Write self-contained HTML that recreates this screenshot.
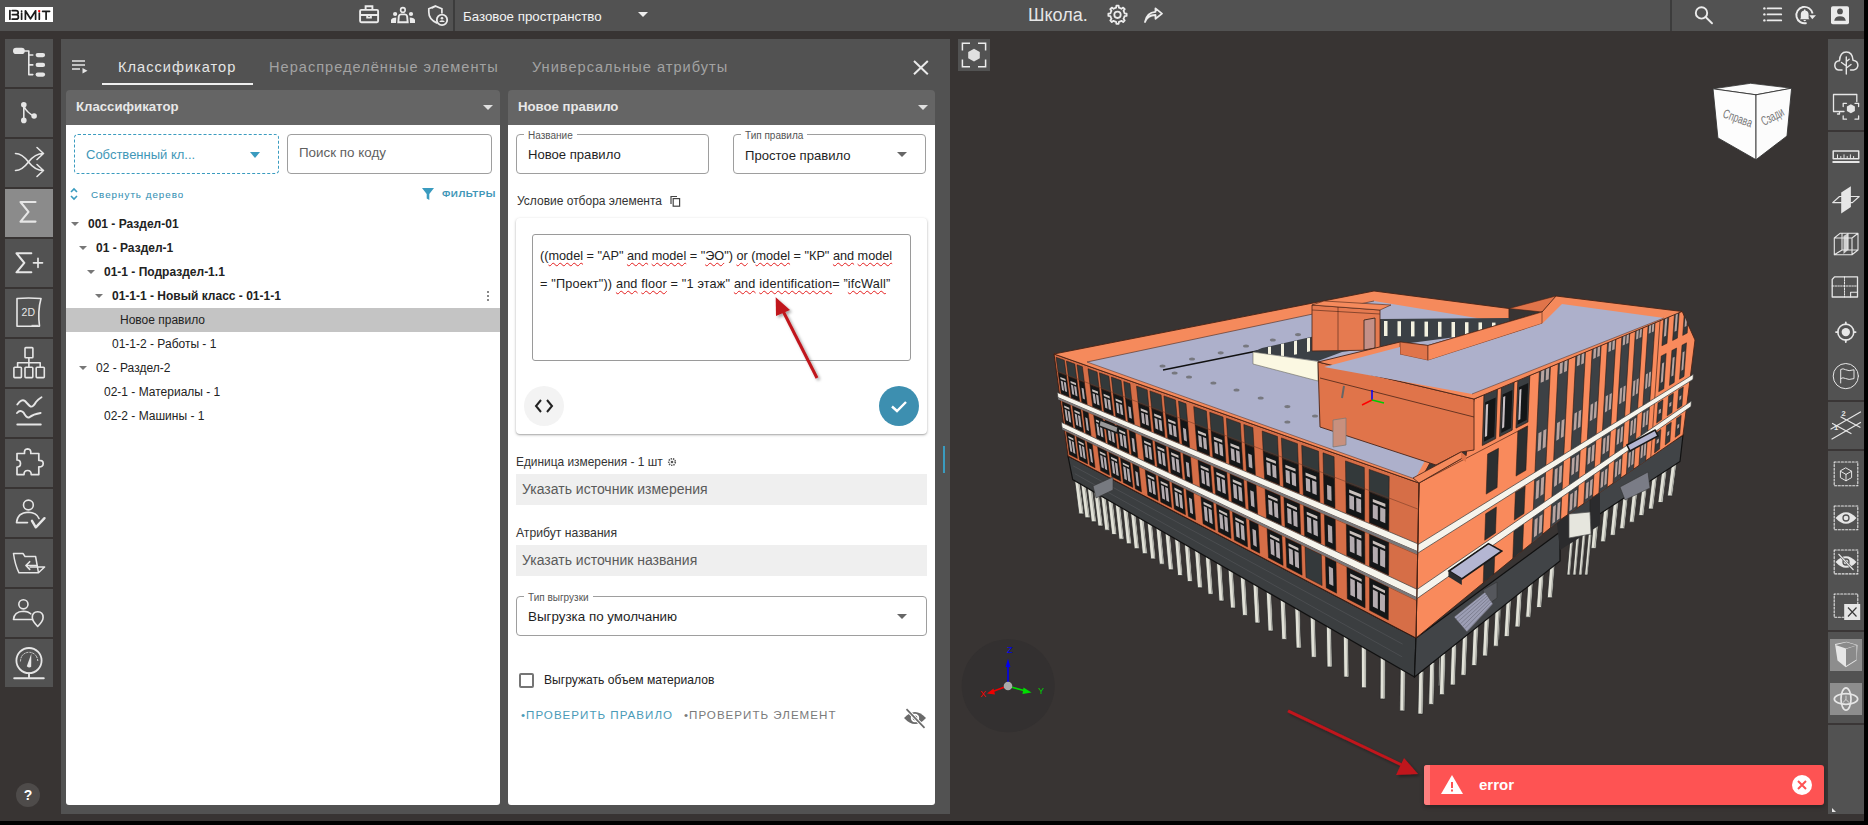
<!DOCTYPE html>
<html><head><meta charset="utf-8">
<style>
*{box-sizing:border-box;margin:0;padding:0}
html,body{width:1868px;height:825px;overflow:hidden;background:#000;font-family:"Liberation Sans",sans-serif}
.abs{position:absolute}
#app{position:absolute;left:0;top:0;width:1864px;height:821px;background:#383433;overflow:hidden}
#top{left:0;top:0;width:1864px;height:31px;background:#525252}
.sb{left:5px;width:48px;height:48px;background:#525252}
.sb.act{background:#8b8b8b}
.sb svg{position:absolute;left:0;top:0}
#panel{left:61px;top:39px;width:889px;height:775px;background:#525252}
.tab{top:58.7px;font-size:14.6px;letter-spacing:1px;color:#a3a3a3}
.hdr{top:90px;height:35px;background:#656565;border-radius:4px 4px 0 0;color:#e8e8e8;font-weight:bold;font-size:13.2px}
.white{background:#fff}
.tri{width:0;height:0;border-left:5px solid transparent;border-right:5px solid transparent;border-top:5px solid #e0e0e0}
.row{left:66px;width:434px;height:24px;font-size:12px;color:#222;line-height:24px;white-space:nowrap}
.row b{font-weight:bold}
.tt{position:absolute;top:10px;width:0;height:0;border-left:4px solid transparent;border-right:4px solid transparent;border-top:4px solid #777}
.lbl{font-size:12.5px;color:#333;white-space:nowrap}
.grayin{left:516px;width:411px;height:31px;background:#efefef;font-size:14px;color:#5a5a5a;line-height:31px;padding-left:6px}
.outl{border:1px solid #a8a8a8;border-radius:4px}
.flab{position:absolute;top:-5.5px;left:8px;background:#fff;padding:0 4px;font-size:10px;color:#555;line-height:12px}
u{text-decoration:underline wavy #e41e1e;text-decoration-thickness:1.1px;text-underline-offset:1.5px}
.rt{left:1828px;width:36px;background:#525252}
</style></head><body>
<div id="app">
  <!-- TOP BAR -->
  <div id="top" class="abs">
    <div class="abs" style="left:5px;top:7px;width:48px;height:15px;background:#fff"></div>
    <svg class="abs" style="left:0;top:0" width="1864" height="31" viewBox="0 0 1864 31">
      <g stroke="#1c1c1c" stroke-width="1.7" fill="none" stroke-linecap="round" stroke-linejoin="round">
        <path d="M9.9 10.6 V19.2"/>
        <path d="M12.2 10.6 H16 Q18.2 10.6 18.2 12.7 Q18.2 14.6 16 14.6 H12.4 M16 14.6 Q18.4 14.6 18.4 16.9 Q18.4 19.2 16 19.2 H12.2"/>
        <path d="M21.6 13 V19.2"/>
        <path d="M25.4 19.2 V10.8 L30.5 18.8 L35.6 10.8 V19.2"/>
        <path d="M39.3 13 V19.2"/>
        <path d="M42.6 11.3 H49.6 M46.1 11.5 V19.2"/>
      </g>
      <circle cx="21.6" cy="11.2" r="0.9" fill="#1c1c1c"/>
      <rect x="38.2" y="10.1" width="2" height="2" fill="#f00"/>
      <g stroke="#ebebeb" stroke-width="1.9" fill="none">
        <rect x="360.1" y="9.9" width="18" height="12.3" rx="1.2"/>
        <path d="M365.6 9.6 V6.2 H372.4 V9.6 M360.3 15 H378 M367.2 15 V17.6 H370.9 V15"/>
        <circle cx="402.9" cy="9.9" r="2.3" stroke-width="1.6"/>
        <path d="M398.3 22.3 L398.8 16.2 Q399.2 14.4 401 14.4 H404.9 Q406.7 14.4 407.1 16.2 L407.7 22.3 Z"/>
        <path d="M431.5 8.2 L435.8 6.1 L441.9 8.8 V13.4 M437.1 23.1 Q428.7 19.5 428.8 12 V8.7 L435.8 5.8" stroke-width="1.7"/>
        <circle cx="442" cy="19.9" r="5.2" stroke-width="1.8"/>
      </g>
      <g fill="#ebebeb">
        <circle cx="395.1" cy="14" r="2.1"/><circle cx="411" cy="14" r="2.1"/>
        <path d="M391 23 V20 Q391.5 17.4 396.3 17.4 L396 23 Z M415 23 V20 Q414.5 17.4 409.7 17.4 L410 23 Z"/>
        <circle cx="442" cy="18.2" r="1.3"/><path d="M439.2 22 Q439.6 20.3 442 20.3 Q444.4 20.3 444.8 22 Z"/>
      </g>
    </svg>
    <div class="abs" style="left:453px;top:0;width:2px;height:31px;background:#3c3c3c"></div>
    <div class="abs" style="left:463px;top:9px;font-size:13.3px;color:#f4f4f4">Базовое пространство</div>
    <div class="abs tri" style="left:638px;top:12px;border-top-color:#eee;border-left-width:5px;border-right-width:5px;border-top-width:5px"></div>
    <div class="abs" style="left:1028px;top:5px;font-size:18px;color:#e6e6e6">Школа.</div>
    <div class="abs" style="left:1670px;top:0;width:2px;height:31px;background:#3c3c3c"></div>
    <svg class="abs" style="left:0;top:0" width="1864" height="31" viewBox="0 0 1864 31">
      <g stroke="#ececec" stroke-width="1.8" fill="none">
        <path d="M1124.56 13.37 L1126.63 13.70 L1126.63 15.90 L1124.56 16.23 L1124.39 16.88 L1123.84 18.21 L1123.50 18.78 L1124.74 20.48 L1123.18 22.04 L1121.48 20.80 L1120.91 21.14 L1119.58 21.69 L1118.93 21.86 L1118.60 23.93 L1116.40 23.93 L1116.07 21.86 L1115.42 21.69 L1114.09 21.14 L1113.52 20.80 L1111.82 22.04 L1110.26 20.48 L1111.50 18.78 L1111.16 18.21 L1110.61 16.88 L1110.44 16.23 L1108.37 15.90 L1108.37 13.70 L1110.44 13.37 L1110.61 12.72 L1111.16 11.39 L1111.50 10.82 L1110.26 9.12 L1111.82 7.56 L1113.52 8.80 L1114.09 8.46 L1115.42 7.91 L1116.07 7.74 L1116.40 5.67 L1118.60 5.67 L1118.93 7.74 L1119.58 7.91 L1120.91 8.46 L1121.48 8.80 L1123.18 7.56 L1124.74 9.12 L1123.50 10.82 L1123.84 11.39 L1124.39 12.72 Z" stroke-linejoin="round"/>
        <circle cx="1117.5" cy="14.8" r="3.2"/>
      </g>
      <path d="M1145 22 Q1147 15.2 1155.5 15 V18.8 L1162 13.6 L1155.5 8.4 V11.8 Q1146.5 12.5 1145 22 Z" fill="none" stroke="#ececec" stroke-width="1.8" stroke-linejoin="round"/>
      <g stroke="#ebebeb" stroke-width="1.9" fill="none" stroke-linecap="round">
        <circle cx="1701.5" cy="12.9" r="5.7"/>
        <path d="M1705.6 17 L1712 23.3"/>
        <path d="M1767.6 8.4 H1781.2 M1767.6 14.4 H1781.2 M1767.6 20.4 H1781.2"/>
      </g>
      <g fill="#ebebeb">
        <circle cx="1764.4" cy="8.4" r="1.2"/><circle cx="1764.4" cy="14.4" r="1.2"/><circle cx="1764.4" cy="20.4" r="1.2"/>
        <path d="M1800.8 18.2 V14.6 Q1800.8 11.2 1804 10.6 V9.4 H1805.4 V10.6 Q1808.6 11.2 1808.6 14.6 V18.2 L1809.6 19.2 H1799.8 Z M1803.4 19.9 H1806 Q1805.7 21.2 1804.7 21.2 Q1803.7 21.2 1803.4 19.9Z"/>
        <path d="M1809.3 15.2 L1816 15.2 L1812.3 19.2 Z"/>
        <rect x="1831" y="6.2" width="18" height="18" rx="1.8"/>
      </g>
      <path d="M1812.6 13.5 A8.2 8.2 0 1 0 1806.6 23" stroke="#ebebeb" stroke-width="1.9" fill="none"/>
      <g fill="#525252">
        <circle cx="1840" cy="11.4" r="2.9"/>
        <path d="M1834.2 20.7 Q1835 16.3 1840 16.3 Q1845 16.3 1845.8 20.7 Z"/>
      </g>
    </svg>
  </div>
  <!-- SIDEBAR -->
  <div class="abs sb" style="top:39px"></div>
  <div class="abs sb" style="top:89px"></div>
  <div class="abs sb" style="top:139px"></div>
  <div class="abs sb act" style="top:189px"></div>
  <div class="abs sb" style="top:239px"></div>
  <div class="abs sb" style="top:289px"></div>
  <div class="abs sb" style="top:339px"></div>
  <div class="abs sb" style="top:389px"></div>
  <div class="abs sb" style="top:439px"></div>
  <div class="abs sb" style="top:489px"></div>
  <div class="abs sb" style="top:539px"></div>
  <div class="abs sb" style="top:589px"></div>
  <div class="abs sb" style="top:639px"></div>
  <svg class="abs" style="left:0;top:0" width="60" height="821" viewBox="0 0 60 821">
    <g stroke="#e6e6e6" fill="none" stroke-width="1.6" stroke-linecap="round" stroke-linejoin="round">
      <!-- 1 tree -->
      <path d="M24.6 51 H28.8 V74.8 M28.8 55 H32.8 M28.8 64.9 H32.8 M28.8 74.6 H32.8"/>
      <!-- 2 branch -->
      <path d="M23.8 104.7 V120.4 M23.8 106 Q27 113 34.1 116"/>
      <!-- 3 shuffle -->
      <path d="M15.5 153.5 Q22 153.5 28.5 162 Q35 170.5 43.5 170.5 M15.5 170.5 Q22 170.5 28.5 162 Q35 153.5 43.5 153.5 M37 147.5 L43.5 153.5 L37 159.5 M37 164.5 L43.5 170.5 L37 176.5"/>
      <!-- 4 sigma -->
      <path d="M35.5 202 H20.5 L28.5 211.8 L20.5 221.6 H35.5" stroke-width="2.1"/>
      <!-- 5 sigma+ -->
      <path d="M31.3 253.3 H16.5 L24.3 262.8 L16.5 272.3 H31.3" stroke-width="2.1"/>
      <path d="M33.5 262.8 H42.5 M38 258.3 V267.3" stroke-width="1.7"/>
      <!-- 6 2D page -->
      <path d="M17 298.5 Q28 297.5 41 298.5 Q37.5 311 39.5 326.2 H17 Z"/>
      <!-- 7 hierarchy -->
      <rect x="25" y="347.6" width="7.9" height="10.1" rx="0.8"/>
      <rect x="13.9" y="367.3" width="7.5" height="10.3" rx="0.8"/>
      <rect x="25" y="367.3" width="7.8" height="10.3" rx="0.8"/>
      <rect x="36.2" y="367.3" width="8.1" height="10.3" rx="0.8"/>
      <path d="M28.9 357.7 V367.3 M17.6 367.3 V362.8 H40.2 V367.3"/>
      <!-- 8 waves -->
      <path d="M17.3 404.5 Q21.5 398.5 25 401 Q29 405.5 30.5 406.5 Q33 407.5 36 402 Q38.5 399 41.5 397.2" stroke-width="1.9"/>
      <path d="M17 413 Q20 409.5 23.5 412.5 Q26.5 418 29 417.5 Q33.5 414 40.6 413" stroke-width="1.9"/>
      <path d="M17.3 424.5 H40.8" stroke-width="1.9"/>
      <!-- 9 puzzle -->
      <path d="M17 453.5 H24.5 Q24 449 27.6 448.8 Q31.2 449 30.8 453.5 H38.8 V460.3 Q43.2 460 43.2 463.5 Q43.2 467 38.8 466.8 V474.6 H31.2 Q31.2 470.5 27.6 470.5 Q24 470.5 24 474.6 H17 V467 Q20.5 467 20.5 463.5 Q20.5 460 17 460 Z" stroke-width="1.7"/>
      <!-- 10 person check -->
      <circle cx="28.4" cy="505" r="4.9"/>
      <path d="M16.5 522.6 Q17.5 512.5 28.3 512.3 Q36.5 512.5 39 518.5 M16.5 522.6 H27.5"/>
      <path d="M32 520.8 L35.8 527.3 L44.5 518.2" stroke-width="2.4"/>
      <!-- 11 folder -->
      <path d="M13.5 553.5 H23 L25 556.5 H35.6 L38.5 572.8 H19 Q15 565 13.5 553.5 Z M38.5 572.8 L44.6 567 H30" stroke-width="1.5"/>
      <path d="M37 565.5 H26 M29.7 561.7 L25.9 565.5 L29.7 569.4" stroke-width="1.6"/>
      <!-- 12 person pin -->
      <circle cx="23.4" cy="604.3" r="4.6"/>
      <path d="M13.5 619.5 Q14 611.5 23.4 611.2 Q28.5 611.5 30.7 613.8 M13.5 619.5 H32.5"/>
      <path d="M37.7 626.5 Q32.3 621 32.3 617.5 Q32.3 611.8 37.7 611.8 Q43.1 611.8 43.1 617.5 Q43.1 621 37.7 626.5 Z"/>
      <!-- 13 gauge -->
      <circle cx="29" cy="660.6" r="12.6" stroke-width="1.8"/>
      <path d="M29 673.3 V677.5 M14.2 678.2 H43.8" stroke-width="1.9"/>
      <path d="M20.5 661 Q21 653 29 652.2 Q37 653 37.8 661" stroke-width="0.9" stroke-dasharray="1.2 1.6"/>
    </g>
    <g fill="#e6e6e6">
      <rect x="13" y="47.8" width="11.8" height="6.3" rx="3.1"/>
      <rect x="35.6" y="53" width="9.5" height="4.2" rx="2.1"/>
      <rect x="35.6" y="62.8" width="9.5" height="4.2" rx="2.1"/>
      <rect x="35.6" y="72.5" width="9.5" height="4.2" rx="2.1"/>
      <circle cx="23.8" cy="104.7" r="2.8"/><circle cx="23.8" cy="120.4" r="2.8"/><circle cx="34.1" cy="116" r="2.8"/>
      <circle cx="37.7" cy="617.4" r="1.2" fill="#525252"/>
      <path d="M26.8 666.2 L31.3 653.8 L31.2 666.8 Q29.2 668.6 26.8 666.2 Z"/>
      <path d="M31.5 324.8 H38.2 V326.5 H31.5 Z" opacity="0.8"/>
    </g>
    <text x="28.3" y="316.3" font-family="Liberation Sans" font-size="10.5" fill="#e6e6e6" text-anchor="middle">2D</text>
  </svg>
  <div class="abs" style="left:16px;top:783px;width:24px;height:24px;border-radius:50%;background:#4e4b4a;color:#fff;font-weight:bold;font-size:14px;text-align:center;line-height:24px">?</div>

  <!-- PANEL -->
  <div id="panel" class="abs"></div>
  <div class="abs tab" style="left:118px;color:#e6e6e6">Классификатор</div>
  <div class="abs" style="left:102px;top:83px;width:151px;height:2px;background:#eee"></div>
  <div class="abs tab" style="left:269px">Нераспределённые элементы</div>
  <div class="abs tab" style="left:532px">Универсальные атрибуты</div>

  <!-- left classifier -->
  <div class="abs hdr" style="left:66px;width:434px"><span class="abs" style="left:10px;top:9px">Классификатор</span></div>
  <div class="abs tri" style="left:483px;top:104.5px"></div>
  <div class="abs white" style="left:66px;top:125px;width:434px;height:680px;border-radius:0 0 3px 3px"></div>

  <!-- left content -->
  <div class="abs" style="left:74px;top:134px;width:205px;height:40px;border:1px dashed #3a9bbf;border-radius:4px"></div>
  <div class="abs" style="left:86px;top:147px;font-size:13px;color:#3f97b8;white-space:nowrap">Собственный кл...</div>
  <div class="abs tri" style="left:250px;top:152px;border-top-color:#3a9bbf;border-top-width:6px"></div>
  <div class="abs outl" style="left:287px;top:134px;width:205px;height:40px;border-color:#9e9e9e"></div>
  <div class="abs" style="left:299px;top:145px;font-size:13.4px;color:#5f5f5f;white-space:nowrap">Поиск по коду</div>
  <svg class="abs" style="left:69px;top:187px" width="10" height="14" viewBox="0 0 10 14"><path d="M2 5 L5 2 L8 5 M2 9 L5 12 L8 9" stroke="#3a9bbf" stroke-width="1.6" fill="none"/></svg>
  <div class="abs" style="left:91px;top:188.5px;font-size:9.8px;letter-spacing:1px;color:#3a93b5;white-space:nowrap;-webkit-text-stroke:0.08px #3a93b5">Свернуть дерево</div>
  <svg class="abs" style="left:422px;top:188px" width="12" height="12" viewBox="0 0 12 12"><path d="M0 0 H12 L7.3 6 V12 L4.7 10.5 V6 Z" fill="#3a9bbf"/></svg>
  <div class="abs" style="left:442px;top:188px;font-size:9.8px;letter-spacing:0.5px;font-weight:bold;color:#3f97b8;white-space:nowrap">ФИЛЬТРЫ</div>

  <div class="abs row" style="top:212px"><i class="tt" style="left:5px"></i><b class="abs" style="left:22px">001 - Раздел-01</b></div>
  <div class="abs row" style="top:236px"><i class="tt" style="left:13px"></i><b class="abs" style="left:30px">01 - Раздел-1</b></div>
  <div class="abs row" style="top:260px"><i class="tt" style="left:21px"></i><b class="abs" style="left:38px">01-1 - Подраздел-1.1</b></div>
  <div class="abs row" style="top:284px"><i class="tt" style="left:29px"></i><b class="abs" style="left:46px">01-1-1 - Новый класс - 01-1-1</b>
    <span class="abs" style="left:421px;top:7px;width:2px;height:2px;background:#888;box-shadow:0 4px 0 #888,0 8px 0 #888"></span></div>
  <div class="abs row" style="top:308px;background:#c4c4c4"><span class="abs" style="left:54px">Новое правило</span></div>
  <div class="abs row" style="top:332px"><span class="abs" style="left:46px">01-1-2 - Работы - 1</span></div>
  <div class="abs row" style="top:356px"><i class="tt" style="left:13px"></i><span class="abs" style="left:30px">02 - Раздел-2</span></div>
  <div class="abs row" style="top:380px"><span class="abs" style="left:38px">02-1 - Материалы - 1</span></div>
  <div class="abs row" style="top:404px"><span class="abs" style="left:38px">02-2 - Машины - 1</span></div>
  <!-- right rule -->
  <div class="abs hdr" style="left:508px;width:427px"><span class="abs" style="left:10px;top:9px">Новое правило</span></div>
  <div class="abs tri" style="left:918px;top:104.5px"></div>
  <div class="abs white" style="left:508px;top:125px;width:427px;height:680px;border-radius:0 0 3px 3px"></div>

  <!-- right form -->
  <div class="abs outl" style="left:516px;top:134px;width:193px;height:40px;border-color:#9e9e9e"><span class="flab" style="left:7px">Название</span></div>
  <div class="abs" style="left:528px;top:147px;font-size:13.1px;color:#1f1f1f;white-space:nowrap">Новое правило</div>
  <div class="abs outl" style="left:733px;top:134px;width:193px;height:40px;border-color:#9e9e9e"><span class="flab" style="left:7px">Тип правила</span></div>
  <div class="abs" style="left:745px;top:148px;font-size:13.1px;color:#1f1f1f;white-space:nowrap">Простое правило</div>
  <div class="abs tri" style="left:897px;top:152px;border-top-color:#666;border-top-width:5px"></div>
  <div class="abs lbl" style="left:517px;top:194px;font-size:12px">Условие отбора элемента</div>
  <svg class="abs" style="left:670px;top:195px" width="11" height="12" viewBox="0 0 11 12"><path d="M1 9 V1.5 H7" stroke="#444" stroke-width="1.2" fill="none"/><rect x="3.2" y="3.6" width="6.4" height="7.6" stroke="#444" stroke-width="1.2" fill="none"/></svg>
  <div class="abs" style="left:516px;top:218px;width:411px;height:216px;background:#fff;border-radius:4px;box-shadow:0 1px 3px rgba(0,0,0,.28),0 1px 1px rgba(0,0,0,.12)"></div>
  <div class="abs" style="left:532px;top:234px;width:379px;height:127px;border:1px solid #9a9a9a;border-radius:3px"></div>
  <div class="abs" style="left:540px;top:248px;font-size:12.7px;color:#222;white-space:nowrap;line-height:17px">((<u>model</u> = "АР" <u>and</u> <u>model</u> = "<u>ЭО</u>") <u>or</u> (<u>model</u> = "КР" <u>and</u> <u>model</u></div>
  <div class="abs" style="left:540px;top:276px;font-size:12.7px;color:#222;white-space:nowrap;line-height:17px;letter-spacing:0.17px">= "Проект")) <u>and</u> <u>floor</u> = "1 этаж" <u>and</u> <u>identification</u>= ”<u>ifcWall</u>”</div>
  <div class="abs" style="left:524px;top:386px;width:40px;height:40px;border-radius:50%;background:#f3f3f3"></div>
  <svg class="abs" style="left:534px;top:398px" width="20" height="16" viewBox="0 0 20 16"><path d="M7 2 L2 8 L7 14 M13 2 L18 8 L13 14" stroke="#222" stroke-width="2" fill="none"/></svg>
  <div class="abs" style="left:879px;top:386px;width:40px;height:40px;border-radius:50%;background:#3d8fb0"></div>
  <svg class="abs" style="left:887px;top:394px" width="24" height="24" viewBox="0 0 24 24"><path d="M5 12.5 L10 17 L19 8" stroke="#fff" stroke-width="2.4" fill="none"/></svg>

  <div class="abs lbl" style="left:516px;top:455px;font-size:11.9px">Единица измерения - 1 шт</div>
  <svg class="abs" style="left:667px;top:457px" width="10" height="10" viewBox="0 0 10 10"><circle cx="5" cy="5" r="3.3" stroke="#555" stroke-width="1.6" fill="none" stroke-dasharray="1.4 0.9"/><circle cx="5" cy="5" r="1.3" fill="#555"/></svg>
  <div class="abs grayin" style="top:474px">Указать источник измерения</div>
  <div class="abs lbl" style="left:516px;top:526px;font-size:12.2px">Атрибут названия</div>
  <div class="abs grayin" style="top:545px">Указать источник названия</div>
  <div class="abs outl" style="left:516px;top:596px;width:411px;height:40px;border-color:#9e9e9e"><span class="flab" style="left:7px">Тип выгрузки</span></div>
  <div class="abs" style="left:528px;top:609px;font-size:13.4px;color:#1f1f1f;white-space:nowrap">Выгрузка по умолчанию</div>
  <div class="abs tri" style="left:897px;top:614px;border-top-color:#666;border-top-width:5px"></div>
  <div class="abs" style="left:519px;top:673px;width:15px;height:15px;border:2px solid #757575;border-radius:2px"></div>
  <div class="abs" style="left:544px;top:673px;font-size:12.1px;color:#222;white-space:nowrap">Выгружать объем материалов</div>
  <div class="abs" style="left:521px;top:708px;font-size:11.6px;letter-spacing:1px;color:#4a9bb8;white-space:nowrap">•ПРОВЕРИТЬ ПРАВИЛО</div>
  <div class="abs" style="left:684px;top:708px;font-size:11.6px;letter-spacing:1px;color:#7a7a7a;white-space:nowrap">•ПРОВЕРИТЬ ЭЛЕМЕНТ</div>
  <div class="abs" style="left:943px;top:446px;width:2px;height:27px;background:#3a9bbf"></div>

  <!-- BUILDING START -->
  <svg class="abs" style="left:0;top:0" width="1864" height="821" viewBox="0 0 1864 821">
<polygon points="1439.5,645.0 1444.5,645.0 1443.3,686.0 1438.3,686.0" fill="#e2e2d8" stroke="#2a2a2a" stroke-width="0.8" stroke-linejoin="round"/>
<line x1="1443.2" y1="646.0" x2="1442.1" y2="685.0" stroke="#9a9a94" stroke-width="0.9"/>
<polygon points="1496.5,603.0 1501.5,603.0 1499.5,640.0 1494.5,640.0" fill="#e2e2d8" stroke="#2a2a2a" stroke-width="0.8" stroke-linejoin="round"/>
<line x1="1500.2" y1="604.0" x2="1498.3" y2="639.0" stroke="#9a9a94" stroke-width="0.9"/>
<polygon points="1074.3,477.8 1079.3,477.8 1083.9,513.9 1078.9,513.9" fill="#e2e2d8" stroke="#2a2a2a" stroke-width="0.8" stroke-linejoin="round"/>
<line x1="1078.1" y1="478.8" x2="1082.7" y2="512.9" stroke="#9a9a94" stroke-width="0.9"/>
<polygon points="1080.5,481.4 1085.5,481.4 1090.1,517.8 1085.1,517.8" fill="#e2e2d8" stroke="#2a2a2a" stroke-width="0.8" stroke-linejoin="round"/>
<line x1="1084.3" y1="482.4" x2="1088.8" y2="516.8" stroke="#9a9a94" stroke-width="0.9"/>
<polygon points="1087.0,485.1 1092.0,485.1 1096.4,521.8 1091.4,521.8" fill="#e2e2d8" stroke="#2a2a2a" stroke-width="0.8" stroke-linejoin="round"/>
<line x1="1090.7" y1="486.1" x2="1095.2" y2="520.8" stroke="#9a9a94" stroke-width="0.9"/>
<polygon points="1093.6,489.0 1098.6,489.0 1103.0,526.0 1098.0,526.0" fill="#e2e2d8" stroke="#2a2a2a" stroke-width="0.8" stroke-linejoin="round"/>
<line x1="1097.4" y1="490.0" x2="1101.8" y2="525.0" stroke="#9a9a94" stroke-width="0.9"/>
<polygon points="1100.5,492.9 1105.5,492.9 1109.8,530.2 1104.8,530.2" fill="#e2e2d8" stroke="#2a2a2a" stroke-width="0.8" stroke-linejoin="round"/>
<line x1="1104.2" y1="493.9" x2="1108.5" y2="529.2" stroke="#9a9a94" stroke-width="0.9"/>
<polygon points="1107.5,497.0 1112.5,497.0 1116.8,534.6 1111.8,534.6" fill="#e2e2d8" stroke="#2a2a2a" stroke-width="0.8" stroke-linejoin="round"/>
<line x1="1111.3" y1="498.0" x2="1115.5" y2="533.6" stroke="#9a9a94" stroke-width="0.9"/>
<polygon points="1114.9,501.2 1119.9,501.2 1124.0,539.2 1119.0,539.2" fill="#e2e2d8" stroke="#2a2a2a" stroke-width="0.8" stroke-linejoin="round"/>
<line x1="1118.6" y1="502.2" x2="1122.8" y2="538.2" stroke="#9a9a94" stroke-width="0.9"/>
<polygon points="1122.5,505.6 1127.5,505.6 1131.5,543.8 1126.5,543.8" fill="#e2e2d8" stroke="#2a2a2a" stroke-width="0.8" stroke-linejoin="round"/>
<line x1="1126.2" y1="506.6" x2="1130.3" y2="542.8" stroke="#9a9a94" stroke-width="0.9"/>
<polygon points="1130.3,510.2 1135.3,510.2 1139.3,548.7 1134.3,548.7" fill="#e2e2d8" stroke="#2a2a2a" stroke-width="0.8" stroke-linejoin="round"/>
<line x1="1134.1" y1="511.2" x2="1138.1" y2="547.7" stroke="#9a9a94" stroke-width="0.9"/>
<polygon points="1138.5,514.9 1143.5,514.9 1147.4,553.7 1142.4,553.7" fill="#e2e2d8" stroke="#2a2a2a" stroke-width="0.8" stroke-linejoin="round"/>
<line x1="1142.2" y1="515.9" x2="1146.1" y2="552.7" stroke="#9a9a94" stroke-width="0.9"/>
<polygon points="1146.9,519.8 1151.9,519.8 1155.7,558.9 1150.7,558.9" fill="#e2e2d8" stroke="#2a2a2a" stroke-width="0.8" stroke-linejoin="round"/>
<line x1="1150.7" y1="520.8" x2="1154.5" y2="557.9" stroke="#9a9a94" stroke-width="0.9"/>
<polygon points="1155.7,524.8 1160.7,524.8 1164.4,564.2 1159.4,564.2" fill="#e2e2d8" stroke="#2a2a2a" stroke-width="0.8" stroke-linejoin="round"/>
<line x1="1159.5" y1="525.8" x2="1163.1" y2="563.2" stroke="#9a9a94" stroke-width="0.9"/>
<polygon points="1164.8,530.1 1169.8,530.1 1173.4,569.8 1168.4,569.8" fill="#e2e2d8" stroke="#2a2a2a" stroke-width="0.8" stroke-linejoin="round"/>
<line x1="1168.6" y1="531.1" x2="1172.1" y2="568.8" stroke="#9a9a94" stroke-width="0.9"/>
<polygon points="1174.3,535.6 1179.3,535.6 1182.7,575.6 1177.7,575.6" fill="#e2e2d8" stroke="#2a2a2a" stroke-width="0.8" stroke-linejoin="round"/>
<line x1="1178.1" y1="536.6" x2="1181.5" y2="574.6" stroke="#9a9a94" stroke-width="0.9"/>
<polygon points="1184.2,541.3 1189.2,541.3 1192.4,581.6 1187.4,581.6" fill="#e2e2d8" stroke="#2a2a2a" stroke-width="0.8" stroke-linejoin="round"/>
<line x1="1187.9" y1="542.3" x2="1191.2" y2="580.6" stroke="#9a9a94" stroke-width="0.9"/>
<polygon points="1194.4,547.2 1199.4,547.2 1202.5,587.8 1197.5,587.8" fill="#e2e2d8" stroke="#2a2a2a" stroke-width="0.8" stroke-linejoin="round"/>
<line x1="1198.2" y1="548.2" x2="1201.3" y2="586.8" stroke="#9a9a94" stroke-width="0.9"/>
<polygon points="1205.1,553.4 1210.1,553.4 1213.1,594.3 1208.1,594.3" fill="#e2e2d8" stroke="#2a2a2a" stroke-width="0.8" stroke-linejoin="round"/>
<line x1="1208.9" y1="554.4" x2="1211.8" y2="593.3" stroke="#9a9a94" stroke-width="0.9"/>
<polygon points="1216.3,559.8 1221.3,559.8 1224.0,601.0 1219.0,601.0" fill="#e2e2d8" stroke="#2a2a2a" stroke-width="0.8" stroke-linejoin="round"/>
<line x1="1220.0" y1="560.8" x2="1222.8" y2="600.0" stroke="#9a9a94" stroke-width="0.9"/>
<polygon points="1227.9,566.5 1232.9,566.5 1235.5,608.0 1230.5,608.0" fill="#e2e2d8" stroke="#2a2a2a" stroke-width="0.8" stroke-linejoin="round"/>
<line x1="1231.7" y1="567.5" x2="1234.2" y2="607.0" stroke="#9a9a94" stroke-width="0.9"/>
<polygon points="1240.1,573.6 1245.1,573.6 1247.5,615.4 1242.5,615.4" fill="#e2e2d8" stroke="#2a2a2a" stroke-width="0.8" stroke-linejoin="round"/>
<line x1="1243.9" y1="574.6" x2="1246.2" y2="614.4" stroke="#9a9a94" stroke-width="0.9"/>
<polygon points="1252.8,580.9 1257.8,580.9 1260.0,623.0 1255.0,623.0" fill="#e2e2d8" stroke="#2a2a2a" stroke-width="0.8" stroke-linejoin="round"/>
<line x1="1256.6" y1="581.9" x2="1258.7" y2="622.0" stroke="#9a9a94" stroke-width="0.9"/>
<polygon points="1266.1,588.6 1271.1,588.6 1273.1,631.0 1268.1,631.0" fill="#e2e2d8" stroke="#2a2a2a" stroke-width="0.8" stroke-linejoin="round"/>
<line x1="1269.9" y1="589.6" x2="1271.8" y2="630.0" stroke="#9a9a94" stroke-width="0.9"/>
<polygon points="1280.1,596.7 1285.1,596.7 1286.8,639.4 1281.8,639.4" fill="#e2e2d8" stroke="#2a2a2a" stroke-width="0.8" stroke-linejoin="round"/>
<line x1="1283.8" y1="597.7" x2="1285.5" y2="638.4" stroke="#9a9a94" stroke-width="0.9"/>
<polygon points="1294.7,605.1 1299.7,605.1 1301.2,648.1 1296.2,648.1" fill="#e2e2d8" stroke="#2a2a2a" stroke-width="0.8" stroke-linejoin="round"/>
<line x1="1298.5" y1="606.1" x2="1299.9" y2="647.1" stroke="#9a9a94" stroke-width="0.9"/>
<polygon points="1310.1,614.0 1315.1,614.0 1316.3,657.3 1311.3,657.3" fill="#e2e2d8" stroke="#2a2a2a" stroke-width="0.8" stroke-linejoin="round"/>
<line x1="1313.9" y1="615.0" x2="1315.0" y2="656.3" stroke="#9a9a94" stroke-width="0.9"/>
<polygon points="1326.3,623.3 1331.3,623.3 1332.1,667.0 1327.1,667.0" fill="#e2e2d8" stroke="#2a2a2a" stroke-width="0.8" stroke-linejoin="round"/>
<line x1="1330.0" y1="624.3" x2="1330.9" y2="666.0" stroke="#9a9a94" stroke-width="0.9"/>
<polygon points="1343.3,633.2 1348.3,633.2 1348.9,677.1 1343.9,677.1" fill="#e2e2d8" stroke="#2a2a2a" stroke-width="0.8" stroke-linejoin="round"/>
<line x1="1347.1" y1="634.2" x2="1347.6" y2="676.1" stroke="#9a9a94" stroke-width="0.9"/>
<polygon points="1361.3,643.6 1366.3,643.6 1366.5,687.8 1361.5,687.8" fill="#e2e2d8" stroke="#2a2a2a" stroke-width="0.8" stroke-linejoin="round"/>
<line x1="1365.0" y1="644.6" x2="1365.2" y2="686.8" stroke="#9a9a94" stroke-width="0.9"/>
<polygon points="1380.3,654.5 1385.3,654.5 1385.1,699.0 1380.1,699.0" fill="#e2e2d8" stroke="#2a2a2a" stroke-width="0.8" stroke-linejoin="round"/>
<line x1="1384.0" y1="655.5" x2="1383.9" y2="698.0" stroke="#9a9a94" stroke-width="0.9"/>
<polygon points="1400.3,666.1 1405.3,666.1 1404.8,710.9 1399.8,710.9" fill="#e2e2d8" stroke="#2a2a2a" stroke-width="0.8" stroke-linejoin="round"/>
<line x1="1404.1" y1="667.1" x2="1403.5" y2="709.9" stroke="#9a9a94" stroke-width="0.9"/>
<polygon points="1418.8,671.3 1423.8,671.3 1422.9,714.1 1417.9,714.1" fill="#e2e2d8" stroke="#2a2a2a" stroke-width="0.8" stroke-linejoin="round"/>
<line x1="1422.5" y1="672.3" x2="1421.7" y2="713.1" stroke="#9a9a94" stroke-width="0.9"/>
<polygon points="1429.7,662.4 1434.7,662.4 1433.7,704.4 1428.7,704.4" fill="#e2e2d8" stroke="#2a2a2a" stroke-width="0.8" stroke-linejoin="round"/>
<line x1="1433.5" y1="663.4" x2="1432.4" y2="703.4" stroke="#9a9a94" stroke-width="0.9"/>
<polygon points="1440.6,653.5 1445.6,653.5 1444.4,694.7 1439.4,694.7" fill="#e2e2d8" stroke="#2a2a2a" stroke-width="0.8" stroke-linejoin="round"/>
<line x1="1444.4" y1="654.5" x2="1443.2" y2="693.7" stroke="#9a9a94" stroke-width="0.9"/>
<polygon points="1451.5,644.6 1456.5,644.6 1455.2,685.0 1450.2,685.0" fill="#e2e2d8" stroke="#2a2a2a" stroke-width="0.8" stroke-linejoin="round"/>
<line x1="1455.3" y1="645.6" x2="1453.9" y2="684.0" stroke="#9a9a94" stroke-width="0.9"/>
<polygon points="1462.5,635.6 1467.5,635.6 1465.9,675.3 1460.9,675.3" fill="#e2e2d8" stroke="#2a2a2a" stroke-width="0.8" stroke-linejoin="round"/>
<line x1="1466.2" y1="636.6" x2="1464.7" y2="674.3" stroke="#9a9a94" stroke-width="0.9"/>
<polygon points="1473.4,626.7 1478.4,626.7 1476.7,665.6 1471.7,665.6" fill="#e2e2d8" stroke="#2a2a2a" stroke-width="0.8" stroke-linejoin="round"/>
<line x1="1477.1" y1="627.7" x2="1475.5" y2="664.6" stroke="#9a9a94" stroke-width="0.9"/>
<polygon points="1484.3,617.8 1489.3,617.8 1487.5,655.9 1482.5,655.9" fill="#e2e2d8" stroke="#2a2a2a" stroke-width="0.8" stroke-linejoin="round"/>
<line x1="1488.1" y1="618.8" x2="1486.2" y2="654.9" stroke="#9a9a94" stroke-width="0.9"/>
<polygon points="1495.2,608.9 1500.2,608.9 1498.3,646.2 1493.3,646.2" fill="#e2e2d8" stroke="#2a2a2a" stroke-width="0.8" stroke-linejoin="round"/>
<line x1="1499.0" y1="609.9" x2="1497.0" y2="645.2" stroke="#9a9a94" stroke-width="0.9"/>
<polygon points="1506.2,599.9 1511.2,599.9 1509.1,636.6 1504.1,636.6" fill="#e2e2d8" stroke="#2a2a2a" stroke-width="0.8" stroke-linejoin="round"/>
<line x1="1509.9" y1="600.9" x2="1507.8" y2="635.6" stroke="#9a9a94" stroke-width="0.9"/>
<polygon points="1517.1,591.0 1522.1,591.0 1519.9,626.9 1514.9,626.9" fill="#e2e2d8" stroke="#2a2a2a" stroke-width="0.8" stroke-linejoin="round"/>
<line x1="1520.8" y1="592.0" x2="1518.6" y2="625.9" stroke="#9a9a94" stroke-width="0.9"/>
<polygon points="1528.0,582.1 1533.0,582.1 1530.7,617.2 1525.7,617.2" fill="#e2e2d8" stroke="#2a2a2a" stroke-width="0.8" stroke-linejoin="round"/>
<line x1="1531.8" y1="583.1" x2="1529.4" y2="616.2" stroke="#9a9a94" stroke-width="0.9"/>
<polygon points="1538.9,573.2 1543.9,573.2 1541.5,607.5 1536.5,607.5" fill="#e2e2d8" stroke="#2a2a2a" stroke-width="0.8" stroke-linejoin="round"/>
<line x1="1542.7" y1="574.2" x2="1540.2" y2="606.5" stroke="#9a9a94" stroke-width="0.9"/>
<polygon points="1549.9,564.2 1554.9,564.2 1552.3,597.8 1547.3,597.8" fill="#e2e2d8" stroke="#2a2a2a" stroke-width="0.8" stroke-linejoin="round"/>
<line x1="1553.6" y1="565.2" x2="1551.1" y2="596.8" stroke="#9a9a94" stroke-width="0.9"/>
<polygon points="1594.4,512.5 1599.4,512.5 1596.0,548.4 1591.0,548.4" fill="#e2e2d8" stroke="#2a2a2a" stroke-width="0.8" stroke-linejoin="round"/>
<line x1="1598.1" y1="513.5" x2="1594.7" y2="547.4" stroke="#9a9a94" stroke-width="0.9"/>
<polygon points="1604.0,506.3 1609.0,506.3 1605.5,541.8 1600.5,541.8" fill="#e2e2d8" stroke="#2a2a2a" stroke-width="0.8" stroke-linejoin="round"/>
<line x1="1607.8" y1="507.3" x2="1604.3" y2="540.8" stroke="#9a9a94" stroke-width="0.9"/>
<polygon points="1613.7,500.1 1618.7,500.1 1615.1,535.3 1610.1,535.3" fill="#e2e2d8" stroke="#2a2a2a" stroke-width="0.8" stroke-linejoin="round"/>
<line x1="1617.5" y1="501.1" x2="1613.8" y2="534.3" stroke="#9a9a94" stroke-width="0.9"/>
<polygon points="1623.4,493.8 1628.4,493.8 1624.6,528.7 1619.6,528.7" fill="#e2e2d8" stroke="#2a2a2a" stroke-width="0.8" stroke-linejoin="round"/>
<line x1="1627.1" y1="494.8" x2="1623.4" y2="527.7" stroke="#9a9a94" stroke-width="0.9"/>
<polygon points="1633.0,487.6 1638.0,487.6 1634.2,522.2 1629.2,522.2" fill="#e2e2d8" stroke="#2a2a2a" stroke-width="0.8" stroke-linejoin="round"/>
<line x1="1636.8" y1="488.6" x2="1632.9" y2="521.2" stroke="#9a9a94" stroke-width="0.9"/>
<polygon points="1642.7,481.4 1647.7,481.4 1643.7,515.6 1638.7,515.6" fill="#e2e2d8" stroke="#2a2a2a" stroke-width="0.8" stroke-linejoin="round"/>
<line x1="1646.5" y1="482.4" x2="1642.5" y2="514.6" stroke="#9a9a94" stroke-width="0.9"/>
<polygon points="1652.4,475.2 1657.4,475.2 1653.3,509.0 1648.3,509.0" fill="#e2e2d8" stroke="#2a2a2a" stroke-width="0.8" stroke-linejoin="round"/>
<line x1="1656.1" y1="476.2" x2="1652.1" y2="508.0" stroke="#9a9a94" stroke-width="0.9"/>
<polygon points="1662.0,469.0 1667.0,469.0 1662.9,502.5 1657.9,502.5" fill="#e2e2d8" stroke="#2a2a2a" stroke-width="0.8" stroke-linejoin="round"/>
<line x1="1665.8" y1="470.0" x2="1661.6" y2="501.5" stroke="#9a9a94" stroke-width="0.9"/>
<polygon points="1671.7,462.7 1676.7,462.7 1672.4,495.9 1667.4,495.9" fill="#e2e2d8" stroke="#2a2a2a" stroke-width="0.8" stroke-linejoin="round"/>
<line x1="1675.5" y1="463.7" x2="1671.2" y2="494.9" stroke="#9a9a94" stroke-width="0.9"/>
<polygon points="1570.4,534.0 1573.6,534.0 1570.1,575.0 1566.9,575.0" fill="#e2e2d8" stroke="#2a2a2a" stroke-width="0.8" stroke-linejoin="round"/>
<line x1="1572.8" y1="535.0" x2="1569.3" y2="574.0" stroke="#9a9a94" stroke-width="0.9"/>
<polygon points="1576.4,534.0 1579.6,534.0 1576.0,575.0 1572.8,575.0" fill="#e2e2d8" stroke="#2a2a2a" stroke-width="0.8" stroke-linejoin="round"/>
<line x1="1578.8" y1="535.0" x2="1575.2" y2="574.0" stroke="#9a9a94" stroke-width="0.9"/>
<polygon points="1582.4,534.0 1585.6,534.0 1581.9,575.0 1578.7,575.0" fill="#e2e2d8" stroke="#2a2a2a" stroke-width="0.8" stroke-linejoin="round"/>
<line x1="1584.8" y1="535.0" x2="1581.1" y2="574.0" stroke="#9a9a94" stroke-width="0.9"/>
<polygon points="1588.4,534.0 1591.6,534.0 1587.8,575.0 1584.6,575.0" fill="#e2e2d8" stroke="#2a2a2a" stroke-width="0.8" stroke-linejoin="round"/>
<line x1="1590.8" y1="535.0" x2="1587.0" y2="574.0" stroke="#9a9a94" stroke-width="0.9"/>
<polygon points="1068.0,456.0 1416.0,638.0 1414.5,677.0 1072.7,479.6" fill="#3b3e40" stroke="#111" stroke-width="1.2"/>
<polygon points="1416.0,638.0 1560.0,532.0 1560.0,561.0 1414.5,677.0" fill="#414447" stroke="#111" stroke-width="1.2"/>
<polygon points="1588.0,494.0 1683.0,435.0 1680.0,461.5 1592.0,519.0" fill="#414447" stroke="#111" stroke-width="1.2"/>
<polygon points="1556.0,515.0 1600.0,486.0 1600.0,525.0 1560.0,550.0" fill="#2b2b2d"/>
<polygon points="1570.0,482.0 1590.0,472.0 1590.0,513.0 1570.0,515.0" fill="#3d4043" stroke="#222" stroke-width="0.7"/>
<polygon points="1569.0,514.0 1590.0,512.0 1591.0,534.0 1569.0,538.0" fill="#e6e6de" stroke="#555" stroke-width="0.7"/>
<line x1="1073.2" y1="465.9" x2="1402.6" y2="644.1" stroke="#55575a" stroke-width="0.6"/>
<line x1="1074.8" y1="473.7" x2="1402.2" y2="656.9" stroke="#55575a" stroke-width="0.6"/>
<polygon points="1419.0,483.0 1466.0,456.0 1474.0,399.0 1682.0,311.0 1695.0,340.0 1683.0,435.0 1560.0,520.0 1416.0,638.0" fill="#f98a5c" stroke="#4a2416" stroke-width="0.9"/>
<defs><clipPath id="rfc"><polygon points="1419,483 1466,456 1474,399 1682,311 1695,340 1683,435 1560,520 1416,638"/></clipPath></defs><g clip-path="url(#rfc)">
<polygon points="1541.7,319.5 1552.8,315.7 1542.4,540.7 1531.6,548.9" fill="#3d4145" stroke="#2a1a12" stroke-width="0.6"/>
<polygon points="1541.6,363.9 1544.7,362.6 1543.8,381.4 1540.7,382.8" fill="#b8a4a0"/>
<polygon points="1546.5,361.8 1549.5,360.6 1548.7,379.2 1545.7,380.5" fill="#b8a4a0"/>
<polygon points="1538.5,433.3 1541.6,431.6 1540.7,449.8 1537.7,451.6" fill="#b8a4a0"/>
<polygon points="1543.4,430.6 1546.4,428.9 1545.6,447.0 1542.6,448.8" fill="#b8a4a0"/>
<polygon points="1536.4,481.4 1539.4,479.5 1538.6,497.4 1535.6,499.4" fill="#b8a4a0"/>
<polygon points="1541.2,478.3 1544.2,476.4 1543.4,494.1 1540.4,496.1" fill="#b8a4a0"/>
<polygon points="1534.7,519.8 1537.7,517.6 1536.9,535.2 1533.9,537.4" fill="#b8a4a0"/>
<polygon points="1539.5,516.3 1542.5,514.2 1541.7,531.7 1538.7,533.9" fill="#b8a4a0"/>
<polygon points="1560.7,313.1 1571.0,309.6 1560.2,527.2 1550.1,534.9" fill="#3d4145" stroke="#2a1a12" stroke-width="0.6"/>
<polygon points="1560.3,356.0 1563.2,354.8 1562.3,373.0 1559.5,374.3" fill="#b8a4a0"/>
<polygon points="1564.9,354.1 1567.8,352.9 1566.9,370.9 1564.0,372.2" fill="#b8a4a0"/>
<polygon points="1557.1,423.1 1560.0,421.5 1559.1,439.1 1556.3,440.8" fill="#b8a4a0"/>
<polygon points="1561.7,420.6 1564.5,419.0 1563.6,436.5 1560.8,438.1" fill="#b8a4a0"/>
<polygon points="1554.9,469.6 1557.7,467.8 1556.9,485.1 1554.0,487.0" fill="#b8a4a0"/>
<polygon points="1559.4,466.7 1562.2,465.0 1561.4,482.1 1558.6,484.0" fill="#b8a4a0"/>
<polygon points="1553.1,506.7 1555.9,504.7 1555.1,521.8 1552.3,523.8" fill="#b8a4a0"/>
<polygon points="1557.6,503.5 1560.4,501.6 1559.6,518.5 1556.8,520.5" fill="#b8a4a0"/>
<polygon points="1578.3,307.2 1588.0,304.0 1576.8,514.6 1567.4,521.8" fill="#3d4145" stroke="#2a1a12" stroke-width="0.6"/>
<polygon points="1577.8,348.7 1580.5,347.6 1579.6,365.1 1576.9,366.3" fill="#b8a4a0"/>
<polygon points="1582.1,346.9 1584.7,345.8 1583.8,363.2 1581.2,364.4" fill="#b8a4a0"/>
<polygon points="1574.5,413.5 1577.1,412.1 1576.2,429.1 1573.6,430.7" fill="#b8a4a0"/>
<polygon points="1578.7,411.2 1581.3,409.8 1580.4,426.7 1577.8,428.2" fill="#b8a4a0"/>
<polygon points="1572.1,458.6 1574.8,456.9 1573.9,473.7 1571.3,475.5" fill="#b8a4a0"/>
<polygon points="1576.4,455.9 1579.0,454.3 1578.1,470.9 1575.5,472.6" fill="#b8a4a0"/>
<polygon points="1570.3,494.6 1572.9,492.7 1572.1,509.2 1569.4,511.2" fill="#b8a4a0"/>
<polygon points="1574.5,491.6 1577.1,489.7 1576.2,506.1 1573.7,508.0" fill="#b8a4a0"/>
<polygon points="1594.8,301.7 1603.8,298.7 1592.3,502.9 1583.5,509.6" fill="#3d4145" stroke="#2a1a12" stroke-width="0.6"/>
<polygon points="1594.1,341.9 1596.6,340.8 1595.7,357.8 1593.2,358.9" fill="#b8a4a0"/>
<polygon points="1598.1,340.2 1600.6,339.2 1599.6,356.0 1597.2,357.1" fill="#b8a4a0"/>
<polygon points="1590.7,404.7 1593.2,403.3 1592.3,419.8 1589.8,421.3" fill="#b8a4a0"/>
<polygon points="1594.7,402.5 1597.1,401.1 1596.2,417.5 1593.7,419.0" fill="#b8a4a0"/>
<polygon points="1588.3,448.3 1590.8,446.8 1589.9,463.0 1587.4,464.7" fill="#b8a4a0"/>
<polygon points="1592.2,445.8 1594.7,444.3 1593.8,460.4 1591.3,462.0" fill="#b8a4a0"/>
<polygon points="1586.4,483.2 1588.8,481.4 1588.0,497.5 1585.5,499.3" fill="#b8a4a0"/>
<polygon points="1590.3,480.4 1592.8,478.7 1591.9,494.6 1589.4,496.4" fill="#b8a4a0"/>
<polygon points="1610.2,296.5 1618.6,293.7 1606.9,491.8 1598.6,498.1" fill="#3d4145" stroke="#2a1a12" stroke-width="0.6"/>
<polygon points="1609.4,335.5 1611.7,334.5 1610.8,350.9 1608.4,352.0" fill="#b8a4a0"/>
<polygon points="1613.1,333.9 1615.4,332.9 1614.5,349.3 1612.1,350.3" fill="#b8a4a0"/>
<polygon points="1605.8,396.3 1608.2,395.0 1607.2,411.1 1604.9,412.5" fill="#b8a4a0"/>
<polygon points="1609.6,394.3 1611.9,393.0 1610.9,408.9 1608.6,410.3" fill="#b8a4a0"/>
<polygon points="1603.4,438.7 1605.7,437.2 1604.8,453.0 1602.5,454.6" fill="#b8a4a0"/>
<polygon points="1607.1,436.3 1609.4,434.9 1608.5,450.5 1606.2,452.1" fill="#b8a4a0"/>
<polygon points="1601.4,472.5 1603.8,470.9 1602.9,486.4 1600.5,488.2" fill="#b8a4a0"/>
<polygon points="1605.1,469.9 1607.4,468.3 1606.5,483.7 1604.2,485.4" fill="#b8a4a0"/>
<polygon points="1624.6,291.7 1632.5,289.1 1620.6,481.4 1612.8,487.3" fill="#3d4145" stroke="#2a1a12" stroke-width="0.6"/>
<polygon points="1623.7,329.5 1625.9,328.6 1624.9,344.5 1622.7,345.5" fill="#b8a4a0"/>
<polygon points="1627.2,328.0 1629.3,327.1 1628.4,342.9 1626.2,343.9" fill="#b8a4a0"/>
<polygon points="1620.1,388.5 1622.3,387.3 1621.3,402.9 1619.1,404.2" fill="#b8a4a0"/>
<polygon points="1623.6,386.6 1625.7,385.4 1624.8,400.9 1622.6,402.1" fill="#b8a4a0"/>
<polygon points="1617.6,429.7 1619.8,428.3 1618.8,443.6 1616.6,445.1" fill="#b8a4a0"/>
<polygon points="1621.1,427.4 1623.2,426.1 1622.3,441.3 1620.1,442.7" fill="#b8a4a0"/>
<polygon points="1615.6,462.5 1617.8,461.0 1616.8,476.1 1614.7,477.7" fill="#b8a4a0"/>
<polygon points="1619.1,460.1 1621.2,458.5 1620.3,473.5 1618.1,475.1" fill="#b8a4a0"/>
<polygon points="1638.2,287.2 1645.6,284.7 1633.5,471.6 1626.2,477.2" fill="#3d4145" stroke="#2a1a12" stroke-width="0.6"/>
<polygon points="1637.1,323.9 1639.2,323.0 1638.2,338.5 1636.1,339.4" fill="#b8a4a0"/>
<polygon points="1640.4,322.5 1642.4,321.6 1641.4,337.0 1639.4,337.9" fill="#b8a4a0"/>
<polygon points="1633.4,381.2 1635.5,380.1 1634.5,395.2 1632.5,396.4" fill="#b8a4a0"/>
<polygon points="1636.7,379.4 1638.8,378.3 1637.8,393.3 1635.8,394.5" fill="#b8a4a0"/>
<polygon points="1630.9,421.2 1633.0,419.9 1632.0,434.8 1630.0,436.1" fill="#b8a4a0"/>
<polygon points="1634.2,419.1 1636.2,417.8 1635.3,432.6 1633.2,433.9" fill="#b8a4a0"/>
<polygon points="1628.9,453.1 1630.9,451.7 1630.0,466.3 1628.0,467.9" fill="#b8a4a0"/>
<polygon points="1632.2,450.8 1634.2,449.4 1633.3,463.9 1631.2,465.4" fill="#b8a4a0"/>
<polygon points="1650.9,282.9 1657.9,280.6 1645.7,462.4 1638.8,467.7" fill="#3d4145" stroke="#2a1a12" stroke-width="0.6"/>
<polygon points="1649.7,318.6 1651.7,317.7 1650.7,332.8 1648.7,333.7" fill="#b8a4a0"/>
<polygon points="1652.8,317.3 1654.7,316.5 1653.7,331.4 1651.8,332.3" fill="#b8a4a0"/>
<polygon points="1646.0,374.3 1648.0,373.2 1647.0,387.9 1645.1,389.1" fill="#b8a4a0"/>
<polygon points="1649.1,372.6 1651.1,371.5 1650.1,386.1 1648.2,387.3" fill="#b8a4a0"/>
<polygon points="1643.5,413.2 1645.4,411.9 1644.5,426.4 1642.5,427.7" fill="#b8a4a0"/>
<polygon points="1646.6,411.2 1648.5,410.0 1647.5,424.4 1645.6,425.6" fill="#b8a4a0"/>
<polygon points="1641.4,444.2 1643.4,442.9 1642.4,457.2 1640.5,458.6" fill="#b8a4a0"/>
<polygon points="1644.5,442.0 1646.4,440.7 1645.5,454.9 1643.6,456.3" fill="#b8a4a0"/>
<polygon points="1665.1,298.8 1670.2,296.9 1667.0,343.3 1661.9,345.8" fill="#33373a" stroke="#2a1a12" stroke-width="0.5"/>
<polygon points="1666.0,306.7 1668.2,305.8 1666.1,335.8 1663.9,336.8" fill="#b8a4a0"/>
<polygon points="1661.2,356.1 1666.2,353.4 1663.8,388.8 1658.7,391.8" fill="#33373a" stroke="#2a1a12" stroke-width="0.5"/>
<polygon points="1662.1,363.5 1664.2,362.3 1662.9,381.6 1660.7,382.9" fill="#b8a4a0"/>
<polygon points="1658.0,403.0 1663.0,399.8 1661.6,419.6 1656.6,423.1" fill="#33373a" stroke="#2a1a12" stroke-width="0.5"/>
<polygon points="1658.9,410.1 1661.0,408.7 1660.8,412.7 1658.6,414.1" fill="#b8a4a0"/>
<polygon points="1655.9,433.0 1660.9,429.5 1659.6,449.1 1654.5,452.9" fill="#33373a" stroke="#2a1a12" stroke-width="0.5"/>
<polygon points="1656.8,440.0 1659.0,438.4 1658.7,442.3 1656.5,443.9" fill="#b8a4a0"/>
<polygon points="1675.8,294.7 1680.6,292.9 1677.4,338.1 1672.6,340.5" fill="#33373a" stroke="#2a1a12" stroke-width="0.5"/>
<polygon points="1676.6,302.3 1678.7,301.5 1676.6,330.7 1674.5,331.7" fill="#b8a4a0"/>
<polygon points="1671.9,350.5 1676.6,348.0 1674.2,382.4 1669.4,385.4" fill="#33373a" stroke="#2a1a12" stroke-width="0.5"/>
<polygon points="1672.7,357.8 1674.7,356.7 1673.4,375.4 1671.3,376.6" fill="#b8a4a0"/>
<polygon points="1668.6,396.2 1673.4,393.2 1672.0,412.6 1667.2,415.8" fill="#33373a" stroke="#2a1a12" stroke-width="0.5"/>
<polygon points="1669.4,403.2 1671.5,401.8 1671.2,405.7 1669.2,407.1" fill="#b8a4a0"/>
<polygon points="1666.5,425.6 1671.3,422.2 1669.9,441.3 1665.2,444.9" fill="#33373a" stroke="#2a1a12" stroke-width="0.5"/>
<polygon points="1667.4,432.3 1669.4,430.8 1669.1,434.7 1667.1,436.2" fill="#b8a4a0"/>
<polygon points="1685.9,290.8 1690.5,289.1 1687.2,333.1 1682.7,335.4" fill="#33373a" stroke="#2a1a12" stroke-width="0.5"/>
<polygon points="1686.7,298.3 1688.6,297.5 1686.5,326.0 1684.6,326.9" fill="#b8a4a0"/>
<polygon points="1682.0,345.2 1686.5,342.8 1684.0,376.4 1679.5,379.2" fill="#33373a" stroke="#2a1a12" stroke-width="0.5"/>
<polygon points="1682.7,352.3 1684.6,351.3 1683.3,369.6 1681.4,370.7" fill="#b8a4a0"/>
<polygon points="1678.7,389.8 1683.3,386.9 1681.9,405.8 1677.3,408.9" fill="#33373a" stroke="#2a1a12" stroke-width="0.5"/>
<polygon points="1679.5,396.6 1681.4,395.3 1681.1,399.1 1679.2,400.4" fill="#b8a4a0"/>
<polygon points="1676.6,418.4 1681.2,415.2 1679.8,433.9 1675.2,437.3" fill="#33373a" stroke="#2a1a12" stroke-width="0.5"/>
<polygon points="1677.4,425.1 1679.3,423.7 1679.0,427.4 1677.1,428.8" fill="#b8a4a0"/>
<line x1="1662.5" y1="284.3" x2="1650.6" y2="459.6" stroke="#4a2416" stroke-width="0.7"/>
<polygon points="1484.9,366.9 1498.4,361.8 1495.7,438.6 1482.3,445.5" fill="#3a3e41" stroke="#2a1a12" stroke-width="0.7"/>
<polygon points="1485.2,402.2 1495.7,397.5 1494.3,436.5 1483.9,441.8" fill="#141617"/>
<polygon points="1485.9,404.8 1488.2,403.8 1487.1,435.9 1484.8,437.1" fill="#c8c0c4"/>
<polygon points="1502.4,360.2 1515.1,355.3 1512.2,430.1 1499.6,436.6" fill="#3a3e41" stroke="#2a1a12" stroke-width="0.7"/>
<polygon points="1502.6,394.5 1512.4,390.1 1511.0,428.0 1501.2,433.0" fill="#141617"/>
<polygon points="1503.2,397.0 1505.3,396.1 1504.2,427.3 1502.0,428.4" fill="#c8c0c4"/>
<polygon points="1518.9,353.9 1530.9,349.3 1527.9,422.0 1516.0,428.1" fill="#3a3e41" stroke="#2a1a12" stroke-width="0.7"/>
<polygon points="1518.9,387.2 1528.2,383.1 1526.7,420.0 1517.4,424.7" fill="#141617"/>
<polygon points="1519.5,389.7 1521.5,388.8 1520.3,419.2 1518.3,420.2" fill="#c8c0c4"/>
<polygon points="1487.6,454.1 1498.5,448.3 1497.1,487.5 1486.2,494.1" fill="#2c2f31" stroke="#2a1a12" stroke-width="0.5"/>
<polygon points="1517.8,431.2 1527.7,426.0 1525.9,470.2 1516.0,476.1" fill="#2c2f31" stroke="#2a1a12" stroke-width="0.5"/>
<polygon points="1485.6,513.8 1496.4,506.9 1495.5,532.9 1484.7,540.3" fill="#2c2f31" stroke="#2a1a12" stroke-width="0.5"/>
<polygon points="1515.4,492.2 1525.2,486.0 1524.0,513.5 1514.3,520.1" fill="#2c2f31" stroke="#2a1a12" stroke-width="0.5"/>
<polygon points="1484.2,554.1 1495.0,546.5 1494.0,574.8 1483.2,582.9" fill="#2c2f31" stroke="#2a1a12" stroke-width="0.5"/>
<polygon points="1513.9,530.7 1523.6,523.8 1522.4,553.4 1512.7,560.7" fill="#2c2f31" stroke="#2a1a12" stroke-width="0.5"/>
<line x1="1419.0" y1="483.0" x2="1527.7" y2="426.0" stroke="#4a2416" stroke-width="0.7"/>
</g>
<polygon points="1415.5,546.1 1693.4,374.3 1693.0,379.4 1415.3,554.7" fill="#f6f4ec" stroke="#3a3a3a" stroke-width="0.7"/>
<polygon points="1414.6,591.1 1691.4,401.1 1691.0,406.6 1414.5,600.3" fill="#f6f4ec" stroke="#3a3a3a" stroke-width="0.7"/>
<polygon points="1054.0,354.0 1419.0,483.0 1416.0,638.0 1068.0,456.0" fill="#d66e47" stroke="#3a1a10" stroke-width="0.9"/>
<polygon points="1056.1,357.3 1064.3,360.2 1066.4,375.8 1058.2,372.7" fill="#33393a" stroke="#24140e" stroke-width="0.5"/>
<polygon points="1058.2,372.7 1066.4,375.8 1069.2,396.9 1061.1,393.5" fill="#141617" stroke="#24140e" stroke-width="0.5"/>
<polygon points="1060.7,380.6 1062.8,381.4 1064.1,390.9 1062.0,390.0" fill="#b4acb0"/>
<polygon points="1063.8,381.8 1065.9,382.6 1067.1,392.1 1065.0,391.3" fill="#b4acb0"/>
<polygon points="1060.2,376.9 1065.4,378.9 1065.7,381.1 1060.5,379.0" fill="#c8c0bc"/>
<polygon points="1062.1,401.3 1070.2,404.8 1073.2,427.4 1065.2,423.7" fill="#141617" stroke="#24140e" stroke-width="0.5"/>
<polygon points="1064.6,409.1 1066.6,410.0 1068.2,421.2 1066.1,420.3" fill="#b4acb0"/>
<polygon points="1067.6,410.4 1069.7,411.4 1071.2,422.7 1069.1,421.7" fill="#b4acb0"/>
<polygon points="1064.1,405.5 1069.2,407.8 1069.5,409.8 1064.3,407.5" fill="#c8c0bc"/>
<polygon points="1066.3,431.7 1074.3,435.6 1077.4,458.6 1069.4,454.5" fill="#141617" stroke="#24140e" stroke-width="0.5"/>
<polygon points="1068.7,439.4 1070.7,440.4 1072.4,452.3 1070.3,451.3" fill="#b4acb0"/>
<polygon points="1071.7,440.9 1073.8,441.9 1075.4,453.9 1073.3,452.8" fill="#b4acb0"/>
<polygon points="1068.2,435.9 1073.3,438.4 1073.6,440.4 1068.5,437.9" fill="#c8c0bc"/>
<polygon points="1066.4,361.0 1074.8,364.0 1076.9,379.8 1068.4,376.6" fill="#33393a" stroke="#24140e" stroke-width="0.5"/>
<polygon points="1068.4,376.6 1076.9,379.8 1079.6,401.3 1071.2,397.8" fill="#141617" stroke="#24140e" stroke-width="0.5"/>
<polygon points="1070.9,384.6 1073.1,385.5 1074.3,395.1 1072.2,394.2" fill="#b4acb0"/>
<polygon points="1074.1,385.9 1076.3,386.8 1077.5,396.4 1075.4,395.5" fill="#b4acb0"/>
<polygon points="1070.4,380.9 1075.8,383.0 1076.1,385.2 1070.7,383.0" fill="#c8c0bc"/>
<polygon points="1072.3,405.6 1080.7,409.3 1083.6,432.3 1075.3,428.4" fill="#141617" stroke="#24140e" stroke-width="0.5"/>
<polygon points="1074.7,413.6 1076.9,414.6 1078.4,426.0 1076.2,425.0" fill="#b4acb0"/>
<polygon points="1077.9,415.0 1080.1,416.0 1081.6,427.4 1079.4,426.4" fill="#b4acb0"/>
<polygon points="1074.3,409.9 1079.6,412.3 1079.9,414.4 1074.5,412.0" fill="#c8c0bc"/>
<polygon points="1076.4,436.5 1084.7,440.5 1087.7,464.0 1079.4,459.7" fill="#141617" stroke="#24140e" stroke-width="0.5"/>
<polygon points="1078.8,444.4 1080.9,445.4 1082.5,457.5 1080.4,456.4" fill="#b4acb0"/>
<polygon points="1081.9,445.9 1084.1,447.0 1085.7,459.2 1083.5,458.0" fill="#b4acb0"/>
<polygon points="1078.3,440.8 1083.6,443.4 1083.9,445.4 1078.6,442.8" fill="#c8c0bc"/>
<polygon points="1077.0,364.8 1082.4,366.7 1084.4,382.7 1079.0,380.6" fill="#33393a" stroke="#24140e" stroke-width="0.5"/>
<polygon points="1079.0,380.6 1084.4,382.7 1087.2,404.5 1081.8,402.2" fill="#141617" stroke="#24140e" stroke-width="0.5"/>
<polygon points="1081.5,387.8 1083.6,388.6 1085.0,399.5 1082.8,398.6" fill="#b0a8ac"/>
<polygon points="1082.8,410.2 1088.2,412.5 1091.1,435.8 1085.7,433.3" fill="#141617" stroke="#24140e" stroke-width="0.5"/>
<polygon points="1085.2,417.2 1087.4,418.2 1089.0,430.9 1086.8,429.9" fill="#b0a8ac"/>
<polygon points="1086.8,441.6 1092.2,444.2 1095.1,467.8 1089.8,465.1" fill="#141617" stroke="#24140e" stroke-width="0.5"/>
<polygon points="1089.2,448.5 1091.3,449.6 1093.0,462.9 1090.9,461.8" fill="#b0a8ac"/>
<polygon points="1088.0,368.7 1097.1,372.0 1099.1,388.3 1090.0,384.9" fill="#33393a" stroke="#24140e" stroke-width="0.5"/>
<polygon points="1090.0,384.9 1099.1,388.3 1101.7,410.6 1092.7,406.8" fill="#141617" stroke="#24140e" stroke-width="0.5"/>
<polygon points="1092.5,393.2 1094.9,394.1 1096.1,404.1 1093.8,403.1" fill="#b4acb0"/>
<polygon points="1096.0,394.6 1098.3,395.5 1099.5,405.5 1097.2,404.5" fill="#b4acb0"/>
<polygon points="1092.1,389.3 1097.9,391.6 1098.1,393.8 1092.3,391.6" fill="#c8c0bc"/>
<polygon points="1093.7,414.9 1102.7,418.8 1105.5,442.6 1096.6,438.4" fill="#141617" stroke="#24140e" stroke-width="0.5"/>
<polygon points="1096.2,423.1 1098.5,424.2 1100.0,435.9 1097.7,434.9" fill="#b4acb0"/>
<polygon points="1099.6,424.6 1102.0,425.7 1103.4,437.5 1101.1,436.4" fill="#b4acb0"/>
<polygon points="1095.8,419.4 1101.5,421.9 1101.8,424.1 1096.0,421.5" fill="#c8c0bc"/>
<polygon points="1097.6,446.8 1106.6,451.1 1109.5,475.3 1100.6,470.6" fill="#141617" stroke="#24140e" stroke-width="0.5"/>
<polygon points="1100.1,454.9 1102.4,456.0 1103.9,468.5 1101.6,467.3" fill="#b4acb0"/>
<polygon points="1103.5,456.5 1105.8,457.7 1107.3,470.3 1105.0,469.1" fill="#b4acb0"/>
<polygon points="1099.7,451.2 1105.4,454.0 1105.6,456.1 1099.9,453.3" fill="#c8c0bc"/>
<polygon points="1099.4,372.8 1108.9,376.2 1110.8,392.8 1101.4,389.2" fill="#33393a" stroke="#24140e" stroke-width="0.5"/>
<polygon points="1101.4,389.2 1110.8,392.8 1113.4,415.5 1104.0,411.5" fill="#141617" stroke="#24140e" stroke-width="0.5"/>
<polygon points="1104.0,397.7 1106.4,398.7 1107.6,408.8 1105.2,407.8" fill="#b4acb0"/>
<polygon points="1107.5,399.2 1110.0,400.1 1111.2,410.3 1108.7,409.3" fill="#b4acb0"/>
<polygon points="1103.5,393.8 1109.5,396.2 1109.8,398.4 1103.8,396.1" fill="#c8c0bc"/>
<polygon points="1105.0,419.8 1114.4,423.8 1117.1,448.0 1107.8,443.6" fill="#141617" stroke="#24140e" stroke-width="0.5"/>
<polygon points="1107.6,428.2 1110.0,429.2 1111.4,441.2 1109.0,440.1" fill="#b4acb0"/>
<polygon points="1111.1,429.7 1113.5,430.8 1114.9,442.9 1112.5,441.7" fill="#b4acb0"/>
<polygon points="1107.1,424.3 1113.1,427.0 1113.4,429.2 1107.4,426.5" fill="#c8c0bc"/>
<polygon points="1108.8,452.2 1118.1,456.7 1121.0,481.2 1111.7,476.4" fill="#141617" stroke="#24140e" stroke-width="0.5"/>
<polygon points="1111.4,460.4 1113.8,461.6 1115.3,474.3 1112.9,473.1" fill="#b4acb0"/>
<polygon points="1114.9,462.2 1117.3,463.4 1118.8,476.1 1116.4,474.9" fill="#b4acb0"/>
<polygon points="1110.9,456.7 1116.9,459.6 1117.1,461.8 1111.2,458.8" fill="#c8c0bc"/>
<polygon points="1111.3,377.0 1121.1,380.6 1123.0,397.5 1113.2,393.8" fill="#33393a" stroke="#24140e" stroke-width="0.5"/>
<polygon points="1113.2,393.8 1123.0,397.5 1125.5,420.5 1115.8,416.5" fill="#141617" stroke="#24140e" stroke-width="0.5"/>
<polygon points="1115.9,402.5 1118.4,403.5 1119.5,413.7 1117.0,412.7" fill="#b4acb0"/>
<polygon points="1119.6,403.9 1122.1,404.9 1123.3,415.2 1120.7,414.2" fill="#b4acb0"/>
<polygon points="1115.4,398.5 1121.7,400.9 1121.9,403.2 1115.7,400.7" fill="#c8c0bc"/>
<polygon points="1116.7,424.8 1126.5,429.0 1129.2,453.6 1119.5,449.1" fill="#141617" stroke="#24140e" stroke-width="0.5"/>
<polygon points="1119.4,433.4 1121.9,434.5 1123.2,446.7 1120.7,445.5" fill="#b4acb0"/>
<polygon points="1123.0,435.0 1125.6,436.1 1126.9,448.4 1124.4,447.2" fill="#b4acb0"/>
<polygon points="1118.9,429.5 1125.1,432.2 1125.4,434.5 1119.2,431.7" fill="#c8c0bc"/>
<polygon points="1120.5,457.8 1130.1,462.5 1132.9,487.4 1123.3,482.4" fill="#141617" stroke="#24140e" stroke-width="0.5"/>
<polygon points="1123.1,466.2 1125.6,467.4 1127.0,480.3 1124.5,479.1" fill="#b4acb0"/>
<polygon points="1126.7,468.0 1129.2,469.2 1130.7,482.2 1128.2,480.9" fill="#b4acb0"/>
<polygon points="1122.6,462.4 1128.8,465.4 1129.0,467.6 1122.9,464.6" fill="#c8c0bc"/>
<polygon points="1123.7,381.5 1130.0,383.7 1131.8,400.9 1125.5,398.5" fill="#33393a" stroke="#24140e" stroke-width="0.5"/>
<polygon points="1125.5,398.5 1131.8,400.9 1134.3,424.2 1128.0,421.6" fill="#141617" stroke="#24140e" stroke-width="0.5"/>
<polygon points="1128.2,406.2 1130.7,407.2 1131.9,418.8 1129.4,417.8" fill="#b0a8ac"/>
<polygon points="1129.0,430.1 1135.2,432.8 1137.9,457.7 1131.6,454.8" fill="#141617" stroke="#24140e" stroke-width="0.5"/>
<polygon points="1131.6,437.7 1134.1,438.8 1135.5,452.4 1133.0,451.2" fill="#b0a8ac"/>
<polygon points="1132.6,463.6 1138.8,466.6 1141.5,491.9 1135.3,488.7" fill="#141617" stroke="#24140e" stroke-width="0.5"/>
<polygon points="1135.2,471.1 1137.7,472.4 1139.2,486.6 1136.7,485.3" fill="#b0a8ac"/>
<polygon points="1136.5,386.1 1147.2,389.9 1148.9,407.5 1138.3,403.4" fill="#33393a" stroke="#24140e" stroke-width="0.5"/>
<polygon points="1138.3,403.4 1148.9,407.5 1151.3,431.3 1140.7,426.9" fill="#141617" stroke="#24140e" stroke-width="0.5"/>
<polygon points="1141.1,412.4 1143.8,413.5 1144.9,424.2 1142.1,423.0" fill="#b4acb0"/>
<polygon points="1145.1,414.0 1147.8,415.1 1148.9,425.8 1146.1,424.7" fill="#b4acb0"/>
<polygon points="1140.6,408.3 1147.4,410.9 1147.7,413.3 1140.9,410.7" fill="#c8c0bc"/>
<polygon points="1141.6,435.6 1152.2,440.1 1154.7,465.6 1144.2,460.7" fill="#141617" stroke="#24140e" stroke-width="0.5"/>
<polygon points="1144.3,444.5 1147.1,445.7 1148.3,458.3 1145.6,457.0" fill="#b4acb0"/>
<polygon points="1148.3,446.2 1151.1,447.5 1152.3,460.1 1149.6,458.9" fill="#b4acb0"/>
<polygon points="1143.9,440.5 1150.7,443.4 1150.9,445.7 1144.2,442.8" fill="#c8c0bc"/>
<polygon points="1145.2,469.7 1155.6,474.7 1158.2,500.5 1147.8,495.2" fill="#141617" stroke="#24140e" stroke-width="0.5"/>
<polygon points="1147.8,478.4 1150.5,479.7 1151.9,493.1 1149.2,491.7" fill="#b4acb0"/>
<polygon points="1151.8,480.4 1154.5,481.7 1155.8,495.1 1153.1,493.7" fill="#b4acb0"/>
<polygon points="1147.4,474.5 1154.1,477.8 1154.3,480.0 1147.7,476.7" fill="#c8c0bc"/>
<polygon points="1149.9,390.9 1161.1,394.9 1162.7,412.8 1151.7,408.5" fill="#33393a" stroke="#24140e" stroke-width="0.5"/>
<polygon points="1151.7,408.5 1162.7,412.8 1165.0,437.1 1154.0,432.5" fill="#141617" stroke="#24140e" stroke-width="0.5"/>
<polygon points="1154.4,417.7 1157.3,418.9 1158.3,429.7 1155.5,428.5" fill="#b4acb0"/>
<polygon points="1158.6,419.4 1161.5,420.5 1162.5,431.4 1159.7,430.2" fill="#b4acb0"/>
<polygon points="1154.0,413.5 1161.1,416.3 1161.3,418.7 1154.3,415.9" fill="#c8c0bc"/>
<polygon points="1154.9,441.3 1165.8,446.0 1168.3,472.0 1157.4,466.9" fill="#141617" stroke="#24140e" stroke-width="0.5"/>
<polygon points="1157.6,450.4 1160.4,451.6 1161.7,464.5 1158.9,463.2" fill="#b4acb0"/>
<polygon points="1161.8,452.2 1164.6,453.5 1165.8,466.4 1163.0,465.1" fill="#b4acb0"/>
<polygon points="1157.2,446.3 1164.2,449.3 1164.4,451.7 1157.4,448.6" fill="#c8c0bc"/>
<polygon points="1158.3,476.0 1169.1,481.2 1171.6,507.5 1160.8,501.9" fill="#141617" stroke="#24140e" stroke-width="0.5"/>
<polygon points="1161.0,484.9 1163.8,486.3 1165.1,499.8 1162.3,498.4" fill="#b4acb0"/>
<polygon points="1165.1,486.9 1167.9,488.3 1169.2,502.0 1166.4,500.5" fill="#b4acb0"/>
<polygon points="1160.6,480.9 1167.5,484.3 1167.7,486.6 1160.8,483.2" fill="#c8c0bc"/>
<polygon points="1163.9,395.9 1175.5,400.0 1177.1,418.3 1165.6,413.9" fill="#33393a" stroke="#24140e" stroke-width="0.5"/>
<polygon points="1165.6,413.9 1177.1,418.3 1179.3,443.1 1167.8,438.2" fill="#141617" stroke="#24140e" stroke-width="0.5"/>
<polygon points="1168.4,423.3 1171.4,424.5 1172.4,435.5 1169.4,434.3" fill="#b4acb0"/>
<polygon points="1172.8,425.0 1175.8,426.2 1176.8,437.3 1173.7,436.0" fill="#b4acb0"/>
<polygon points="1168.0,419.0 1175.4,421.9 1175.6,424.3 1168.2,421.4" fill="#c8c0bc"/>
<polygon points="1168.6,447.3 1180.1,452.2 1182.4,478.6 1171.0,473.3" fill="#141617" stroke="#24140e" stroke-width="0.5"/>
<polygon points="1171.4,456.5 1174.4,457.8 1175.6,470.9 1172.6,469.5" fill="#b4acb0"/>
<polygon points="1175.7,458.4 1178.7,459.7 1179.9,472.9 1176.9,471.5" fill="#b4acb0"/>
<polygon points="1171.0,452.3 1178.4,455.5 1178.6,457.9 1171.3,454.7" fill="#c8c0bc"/>
<polygon points="1171.9,482.6 1183.2,488.0 1185.5,514.7 1174.3,508.9" fill="#141617" stroke="#24140e" stroke-width="0.5"/>
<polygon points="1174.6,491.6 1177.5,493.1 1178.8,506.9 1175.9,505.4" fill="#b4acb0"/>
<polygon points="1178.9,493.7 1181.9,495.2 1183.1,509.1 1180.1,507.6" fill="#b4acb0"/>
<polygon points="1174.3,487.6 1181.5,491.1 1181.7,493.5 1174.5,489.9" fill="#c8c0bc"/>
<polygon points="1178.5,401.1 1186.0,403.8 1187.6,422.3 1180.1,419.4" fill="#33393a" stroke="#24140e" stroke-width="0.5"/>
<polygon points="1180.1,419.4 1187.6,422.3 1189.6,447.4 1182.2,444.3" fill="#141617" stroke="#24140e" stroke-width="0.5"/>
<polygon points="1182.9,427.8 1185.9,429.0 1187.0,441.5 1184.0,440.3" fill="#b0a8ac"/>
<polygon points="1183.0,453.5 1190.4,456.7 1192.6,483.4 1185.3,479.9" fill="#141617" stroke="#24140e" stroke-width="0.5"/>
<polygon points="1185.8,461.7 1188.8,463.0 1190.0,477.5 1187.1,476.2" fill="#b0a8ac"/>
<polygon points="1186.1,489.4 1193.4,492.9 1195.6,520.0 1188.4,516.2" fill="#141617" stroke="#24140e" stroke-width="0.5"/>
<polygon points="1188.9,497.5 1191.8,499.0 1193.1,514.2 1190.2,512.7" fill="#b0a8ac"/>
<polygon points="1193.7,406.6 1206.4,411.1 1207.8,430.1 1195.2,425.3" fill="#33393a" stroke="#24140e" stroke-width="0.5"/>
<polygon points="1195.2,425.3 1207.8,430.1 1209.7,455.8 1197.2,450.6" fill="#141617" stroke="#24140e" stroke-width="0.5"/>
<polygon points="1198.2,435.1 1201.4,436.4 1202.3,447.8 1199.1,446.5" fill="#b4acb0"/>
<polygon points="1202.9,437.0 1206.2,438.3 1207.1,449.8 1203.8,448.4" fill="#b4acb0"/>
<polygon points="1197.8,430.6 1205.9,433.7 1206.1,436.3 1198.0,433.2" fill="#c8c0bc"/>
<polygon points="1198.0,459.9 1210.4,465.3 1212.5,492.7 1200.1,486.9" fill="#141617" stroke="#24140e" stroke-width="0.5"/>
<polygon points="1200.9,469.6 1204.1,471.0 1205.1,484.5 1201.9,483.1" fill="#b4acb0"/>
<polygon points="1205.6,471.6 1208.8,473.1 1209.8,486.7 1206.6,485.2" fill="#b4acb0"/>
<polygon points="1200.5,465.2 1208.5,468.7 1208.7,471.2 1200.7,467.7" fill="#c8c0bc"/>
<polygon points="1200.9,496.6 1213.2,502.5 1215.2,530.2 1203.1,523.8" fill="#141617" stroke="#24140e" stroke-width="0.5"/>
<polygon points="1203.7,506.0 1206.9,507.6 1208.0,521.9 1204.9,520.2" fill="#b4acb0"/>
<polygon points="1208.4,508.3 1211.6,509.9 1212.7,524.3 1209.5,522.6" fill="#b4acb0"/>
<polygon points="1203.4,501.8 1211.3,505.6 1211.5,508.1 1203.6,504.2" fill="#c8c0bc"/>
<polygon points="1209.7,412.3 1223.0,417.0 1224.3,436.4 1211.1,431.3" fill="#33393a" stroke="#24140e" stroke-width="0.5"/>
<polygon points="1211.1,431.3 1224.3,436.4 1226.0,462.6 1212.9,457.2" fill="#141617" stroke="#24140e" stroke-width="0.5"/>
<polygon points="1214.1,441.4 1217.4,442.7 1218.3,454.4 1214.9,453.0" fill="#b4acb0"/>
<polygon points="1219.0,443.3 1222.5,444.7 1223.3,456.4 1219.8,455.0" fill="#b4acb0"/>
<polygon points="1213.7,436.8 1222.2,440.1 1222.3,442.7 1213.9,439.4" fill="#c8c0bc"/>
<polygon points="1213.6,466.7 1226.7,472.3 1228.5,500.2 1215.6,494.2" fill="#141617" stroke="#24140e" stroke-width="0.5"/>
<polygon points="1216.6,476.5 1219.9,478.0 1220.9,491.8 1217.6,490.3" fill="#b4acb0"/>
<polygon points="1221.5,478.7 1224.9,480.2 1225.8,494.1 1222.5,492.5" fill="#b4acb0"/>
<polygon points="1216.3,472.1 1224.6,475.8 1224.8,478.3 1216.4,474.6" fill="#c8c0bc"/>
<polygon points="1216.3,504.0 1229.2,510.2 1231.1,538.4 1218.4,531.8" fill="#141617" stroke="#24140e" stroke-width="0.5"/>
<polygon points="1219.2,513.6 1222.5,515.3 1223.6,529.8 1220.3,528.2" fill="#b4acb0"/>
<polygon points="1224.1,516.0 1227.4,517.7 1228.4,532.3 1225.1,530.6" fill="#b4acb0"/>
<polygon points="1218.9,509.4 1227.1,513.4 1227.3,515.9 1219.1,511.8" fill="#c8c0bc"/>
<polygon points="1226.4,418.2 1240.3,423.2 1241.4,443.0 1227.6,437.7" fill="#33393a" stroke="#24140e" stroke-width="0.5"/>
<polygon points="1227.6,437.7 1241.4,443.0 1243.0,469.8 1229.4,464.0" fill="#141617" stroke="#24140e" stroke-width="0.5"/>
<polygon points="1230.7,448.0 1234.2,449.4 1235.0,461.3 1231.4,459.8" fill="#b4acb0"/>
<polygon points="1235.9,450.0 1239.5,451.4 1240.2,463.4 1236.6,462.0" fill="#b4acb0"/>
<polygon points="1230.4,443.3 1239.2,446.8 1239.4,449.4 1230.6,446.0" fill="#c8c0bc"/>
<polygon points="1230.0,473.7 1243.6,479.6 1245.3,508.1 1231.8,501.8" fill="#141617" stroke="#24140e" stroke-width="0.5"/>
<polygon points="1233.0,483.8 1236.5,485.4 1237.4,499.4 1233.9,497.8" fill="#b4acb0"/>
<polygon points="1238.1,486.1 1241.7,487.7 1242.6,501.8 1239.0,500.2" fill="#b4acb0"/>
<polygon points="1232.7,479.3 1241.4,483.1 1241.6,485.7 1232.9,481.9" fill="#c8c0bc"/>
<polygon points="1232.5,511.8 1245.9,518.3 1247.6,547.0 1234.3,540.1" fill="#141617" stroke="#24140e" stroke-width="0.5"/>
<polygon points="1235.4,521.6 1238.9,523.3 1239.8,538.2 1236.4,536.4" fill="#b4acb0"/>
<polygon points="1240.5,524.1 1244.0,525.9 1244.9,540.8 1241.4,539.0" fill="#b4acb0"/>
<polygon points="1235.2,517.3 1243.7,521.5 1243.9,524.0 1235.3,519.8" fill="#c8c0bc"/>
<polygon points="1243.8,424.5 1252.9,427.7 1254.0,447.8 1245.0,444.4" fill="#33393a" stroke="#24140e" stroke-width="0.5"/>
<polygon points="1245.0,444.4 1254.0,447.8 1255.4,475.0 1246.5,471.2" fill="#141617" stroke="#24140e" stroke-width="0.5"/>
<polygon points="1248.1,453.5 1251.7,455.0 1252.5,468.5 1248.9,467.0" fill="#b0a8ac"/>
<polygon points="1247.1,481.1 1256.0,485.0 1257.6,513.8 1248.8,509.7" fill="#141617" stroke="#24140e" stroke-width="0.5"/>
<polygon points="1250.2,490.2 1253.7,491.7 1254.6,507.4 1251.1,505.8" fill="#b0a8ac"/>
<polygon points="1249.4,519.9 1258.1,524.1 1259.7,553.2 1251.0,548.7" fill="#141617" stroke="#24140e" stroke-width="0.5"/>
<polygon points="1252.4,528.8 1255.9,530.5 1256.8,546.9 1253.3,545.1" fill="#b0a8ac"/>
<polygon points="1262.2,431.0 1277.5,436.5 1278.4,457.2 1263.2,451.4" fill="#33393a" stroke="#24140e" stroke-width="0.5"/>
<polygon points="1263.2,451.4 1278.4,457.2 1279.6,485.1 1264.6,478.8" fill="#141617" stroke="#24140e" stroke-width="0.5"/>
<polygon points="1266.4,462.1 1270.3,463.6 1270.8,476.1 1267.0,474.4" fill="#b4acb0"/>
<polygon points="1272.1,464.4 1276.0,465.9 1276.6,478.4 1272.7,476.8" fill="#b4acb0"/>
<polygon points="1266.1,457.3 1275.8,461.0 1276.0,463.8 1266.2,460.0" fill="#c8c0bc"/>
<polygon points="1265.1,488.9 1280.1,495.4 1281.3,525.0 1266.5,518.0" fill="#141617" stroke="#24140e" stroke-width="0.5"/>
<polygon points="1268.2,499.4 1272.0,501.1 1272.7,515.8 1268.9,514.0" fill="#b4acb0"/>
<polygon points="1273.8,501.9 1277.7,503.7 1278.4,518.4 1274.5,516.6" fill="#b4acb0"/>
<polygon points="1268.0,494.7 1277.5,498.9 1277.6,501.6 1268.1,497.4" fill="#c8c0bc"/>
<polygon points="1267.1,528.4 1281.8,535.5 1283.1,565.4 1268.5,557.8" fill="#141617" stroke="#24140e" stroke-width="0.5"/>
<polygon points="1270.1,538.7 1273.9,540.6 1274.6,556.0 1270.9,554.1" fill="#b4acb0"/>
<polygon points="1275.7,541.5 1279.5,543.4 1280.2,558.9 1276.4,556.9" fill="#b4acb0"/>
<polygon points="1269.9,534.2 1279.3,538.8 1279.4,541.4 1270.0,536.8" fill="#c8c0bc"/>
<polygon points="1281.4,437.9 1297.5,443.7 1298.3,464.8 1282.3,458.7" fill="#33393a" stroke="#24140e" stroke-width="0.5"/>
<polygon points="1282.3,458.7 1298.3,464.8 1299.3,493.3 1283.5,486.7" fill="#141617" stroke="#24140e" stroke-width="0.5"/>
<polygon points="1285.5,469.7 1289.6,471.3 1290.1,484.0 1286.0,482.3" fill="#b4acb0"/>
<polygon points="1291.5,472.1 1295.7,473.7 1296.2,486.5 1292.0,484.8" fill="#b4acb0"/>
<polygon points="1285.3,464.7 1295.5,468.7 1295.6,471.6 1285.4,467.6" fill="#c8c0bc"/>
<polygon points="1283.9,497.0 1299.6,503.8 1300.7,534.0 1285.1,526.8" fill="#141617" stroke="#24140e" stroke-width="0.5"/>
<polygon points="1287.1,507.8 1291.1,509.6 1291.7,524.5 1287.7,522.7" fill="#b4acb0"/>
<polygon points="1293.0,510.4 1297.1,512.2 1297.6,527.3 1293.6,525.4" fill="#b4acb0"/>
<polygon points="1286.9,503.0 1296.9,507.4 1297.0,510.2 1287.0,505.8" fill="#c8c0bc"/>
<polygon points="1285.6,537.4 1301.1,544.8 1302.1,575.2 1286.8,567.3" fill="#141617" stroke="#24140e" stroke-width="0.5"/>
<polygon points="1288.7,547.9 1292.7,549.9 1293.3,565.6 1289.3,563.6" fill="#b4acb0"/>
<polygon points="1294.5,550.8 1298.6,552.8 1299.1,568.6 1295.1,566.5" fill="#b4acb0"/>
<polygon points="1288.5,543.3 1298.4,548.1 1298.5,550.8 1288.6,545.9" fill="#c8c0bc"/>
<polygon points="1301.7,445.2 1318.6,451.3 1319.2,472.9 1302.4,466.4" fill="#33393a" stroke="#24140e" stroke-width="0.5"/>
<polygon points="1302.4,466.4 1319.2,472.9 1319.9,502.0 1303.3,495.0" fill="#141617" stroke="#24140e" stroke-width="0.5"/>
<polygon points="1305.7,477.7 1310.0,479.4 1310.4,492.3 1306.1,490.6" fill="#b4acb0"/>
<polygon points="1312.0,480.2 1316.4,481.9 1316.7,495.0 1312.4,493.2" fill="#b4acb0"/>
<polygon points="1305.5,472.6 1316.2,476.8 1316.3,479.7 1305.6,475.5" fill="#c8c0bc"/>
<polygon points="1303.7,505.6 1320.2,512.7 1321.0,543.6 1304.7,535.9" fill="#141617" stroke="#24140e" stroke-width="0.5"/>
<polygon points="1306.9,516.6 1311.1,518.5 1311.6,533.7 1307.4,531.8" fill="#b4acb0"/>
<polygon points="1313.1,519.4 1317.4,521.3 1317.9,536.6 1313.6,534.6" fill="#b4acb0"/>
<polygon points="1306.7,511.7 1317.3,516.3 1317.4,519.2 1306.8,514.5" fill="#c8c0bc"/>
<polygon points="1305.0,546.7 1321.3,554.6 1322.1,585.6 1306.0,577.3" fill="#34393b" stroke="#24140e" stroke-width="0.5"/>
<polygon points="1323.0,452.8 1334.1,456.8 1334.5,478.7 1323.5,474.5" fill="#33393a" stroke="#24140e" stroke-width="0.5"/>
<polygon points="1323.5,474.5 1334.5,478.7 1335.0,508.3 1324.2,503.8" fill="#141617" stroke="#24140e" stroke-width="0.5"/>
<polygon points="1327.0,484.7 1331.3,486.4 1331.6,501.1 1327.3,499.3" fill="#b0a8ac"/>
<polygon points="1324.4,514.5 1335.2,519.2 1335.8,550.5 1325.2,545.5" fill="#141617" stroke="#24140e" stroke-width="0.5"/>
<polygon points="1327.8,524.5 1332.1,526.4 1332.5,543.4 1328.2,541.4" fill="#b0a8ac"/>
<polygon points="1325.4,556.6 1336.0,561.7 1336.6,593.2 1326.2,587.7" fill="#141617" stroke="#24140e" stroke-width="0.5"/>
<polygon points="1328.8,566.3 1333.0,568.4 1333.4,586.1 1329.2,584.0" fill="#b0a8ac"/>
<polygon points="1345.5,460.9 1364.3,467.6 1364.5,490.2 1345.8,483.1" fill="#33393a" stroke="#24140e" stroke-width="0.5"/>
<polygon points="1345.8,483.1 1364.5,490.2 1364.6,520.7 1346.2,513.0" fill="#141617" stroke="#24140e" stroke-width="0.5"/>
<polygon points="1349.2,494.9 1354.0,496.8 1354.1,510.4 1349.4,508.4" fill="#b4acb0"/>
<polygon points="1356.2,497.7 1361.1,499.6 1361.2,513.3 1356.4,511.3" fill="#b4acb0"/>
<polygon points="1349.1,489.6 1361.1,494.3 1361.1,497.4 1349.2,492.7" fill="#c8c0bc"/>
<polygon points="1346.3,524.0 1364.7,531.9 1364.9,564.1 1346.8,555.6" fill="#141617" stroke="#24140e" stroke-width="0.5"/>
<polygon points="1349.7,535.6 1354.4,537.7 1354.6,553.6 1349.9,551.4" fill="#b4acb0"/>
<polygon points="1356.6,538.7 1361.4,540.8 1361.5,556.8 1356.7,554.6" fill="#b4acb0"/>
<polygon points="1349.6,530.5 1361.4,535.6 1361.4,538.6 1349.7,533.4" fill="#c8c0bc"/>
<polygon points="1346.9,566.9 1364.9,575.6 1365.1,607.9 1347.3,598.7" fill="#141617" stroke="#24140e" stroke-width="0.5"/>
<polygon points="1350.2,578.3 1354.8,580.5 1355.0,597.2 1350.4,594.9" fill="#b4acb0"/>
<polygon points="1357.0,581.6 1361.7,583.9 1361.8,600.7 1357.1,598.3" fill="#b4acb0"/>
<polygon points="1350.2,573.4 1361.6,579.0 1361.7,581.8 1350.2,576.2" fill="#c8c0bc"/>
<polygon points="1369.2,469.4 1389.2,476.5 1389.0,499.7 1369.3,492.1" fill="#33393a" stroke="#24140e" stroke-width="0.5"/>
<polygon points="1369.3,492.1 1389.0,499.7 1388.8,530.8 1369.4,522.7" fill="#141617" stroke="#24140e" stroke-width="0.5"/>
<polygon points="1372.8,504.3 1377.8,506.3 1377.8,520.1 1372.8,518.1" fill="#b4acb0"/>
<polygon points="1380.2,507.2 1385.4,509.3 1385.3,523.2 1380.2,521.1" fill="#b4acb0"/>
<polygon points="1372.8,498.9 1385.4,503.8 1385.4,506.9 1372.8,502.0" fill="#c8c0bc"/>
<polygon points="1369.4,533.9 1388.8,542.3 1388.6,575.2 1369.5,566.3" fill="#141617" stroke="#24140e" stroke-width="0.5"/>
<polygon points="1372.8,545.9 1377.8,548.1 1377.8,564.3 1372.9,562.1" fill="#b4acb0"/>
<polygon points="1380.1,549.1 1385.2,551.3 1385.1,567.7 1380.1,565.4" fill="#b4acb0"/>
<polygon points="1372.8,540.6 1385.2,546.1 1385.2,549.1 1372.8,543.6" fill="#c8c0bc"/>
<polygon points="1369.5,577.8 1388.5,587.0 1388.3,620.0 1369.6,610.3" fill="#141617" stroke="#24140e" stroke-width="0.5"/>
<polygon points="1372.9,589.5 1377.8,591.9 1377.8,608.9 1372.9,606.4" fill="#b4acb0"/>
<polygon points="1380.0,593.0 1385.0,595.4 1384.9,612.6 1380.0,610.0" fill="#b4acb0"/>
<polygon points="1372.9,584.5 1385.0,590.4 1385.0,593.3 1372.9,587.3" fill="#c8c0bc"/>
<line x1="1056.3" y1="370.9" x2="1418.5" y2="509.3" stroke="#6a3420" stroke-width="0.5"/>
<line x1="1060.4" y1="400.5" x2="1417.6" y2="554.8" stroke="#6a3420" stroke-width="0.5"/>
<line x1="1064.5" y1="430.8" x2="1416.7" y2="600.6" stroke="#6a3420" stroke-width="0.5"/>
<polygon points="1057.2,392.4 1417.8,543.8 1417.7,551.6 1057.9,397.5" fill="#f6f4ec" stroke="#3a3a3a" stroke-width="0.7"/>
<polygon points="1057.9,397.5 1417.7,551.6 1417.6,554.4 1058.2,399.4" fill="#77777a"/>
<polygon points="1061.3,422.3 1416.9,589.3 1416.8,597.6 1062.1,427.8" fill="#f6f4ec" stroke="#3a3a3a" stroke-width="0.7"/>
<polygon points="1062.1,427.8 1416.8,597.6 1416.7,600.3 1062.4,429.6" fill="#77777a"/>
<line x1="1419.0" y1="483.0" x2="1416.0" y2="638.0" stroke="#4a2416" stroke-width="1"/>
<polygon points="1054.0,354.0 1374.0,291.0 1509.0,308.5 1509.0,318.0 1419.0,483.0" fill="#f58a5c" stroke="#4a2416" stroke-width="0.9"/>
<polygon points="1087.0,362.0 1374.0,301.0 1501.0,322.0 1415.0,479.0" fill="#adb0cb"/>
<line x1="1087.0" y1="362.0" x2="1374.0" y2="301.0" stroke="#5a3a30" stroke-width="0.7"/>
<line x1="1087.0" y1="362.0" x2="1415.0" y2="479.0" stroke="#5a3a30" stroke-width="0.6"/>
<ellipse cx="1162.5" cy="366" rx="3" ry="1.6" fill="#77787f"/>
<ellipse cx="1174.6" cy="373" rx="3" ry="1.6" fill="#77787f"/>
<ellipse cx="1189" cy="377" rx="3" ry="1.6" fill="#77787f"/>
<ellipse cx="1192" cy="359" rx="3" ry="1.6" fill="#77787f"/>
<ellipse cx="1220.7" cy="352.8" rx="3" ry="1.6" fill="#77787f"/>
<ellipse cx="1246" cy="346" rx="3" ry="1.6" fill="#77787f"/>
<ellipse cx="1272.8" cy="340" rx="3" ry="1.6" fill="#77787f"/>
<ellipse cx="1298" cy="334.6" rx="3" ry="1.6" fill="#77787f"/>
<ellipse cx="1213.4" cy="383" rx="3" ry="1.6" fill="#77787f"/>
<ellipse cx="1236.5" cy="390" rx="3" ry="1.6" fill="#77787f"/>
<ellipse cx="1260.7" cy="398" rx="3" ry="1.6" fill="#77787f"/>
<ellipse cx="1287.4" cy="406.6" rx="3" ry="1.6" fill="#77787f"/>
<ellipse cx="1287.4" cy="422" rx="3" ry="1.6" fill="#77787f"/>
<ellipse cx="1315" cy="416" rx="3" ry="1.6" fill="#77787f"/>
<line x1="1163.0" y1="370.0" x2="1262.0" y2="350.0" stroke="#111" stroke-width="1.3"/>
<polygon points="1262.0,348.0 1342.0,330.0 1380.0,319.0 1509.0,318.0 1509.0,330.0 1342.0,352.0 1318.0,361.0 1253.0,352.0" fill="#3b4045"/>
<polygon points="1268.0,347.0 1271.0,346.4 1271.0,360.0 1268.0,360.6" fill="#f4f2e0"/>
<polygon points="1281.0,344.1 1284.0,343.5 1284.0,357.1 1281.0,357.7" fill="#f4f2e0"/>
<polygon points="1294.0,341.2 1297.0,340.6 1297.0,354.2 1294.0,354.8" fill="#f4f2e0"/>
<polygon points="1307.0,338.3 1310.0,337.7 1310.0,351.3 1307.0,351.9" fill="#f4f2e0"/>
<polygon points="1320.0,335.4 1323.0,334.8 1323.0,348.4 1320.0,349.0" fill="#f4f2e0"/>
<polygon points="1333.0,332.5 1336.0,331.9 1336.0,345.5 1333.0,346.1" fill="#f4f2e0"/>
<polygon points="1384.0,321.0 1387.5,321.0 1387.5,336.0 1384.0,336.0" fill="#f4f2e0"/>
<polygon points="1397.5,321.2 1401.0,321.2 1401.0,336.2 1397.5,336.2" fill="#f4f2e0"/>
<polygon points="1411.0,321.4 1414.5,321.4 1414.5,336.4 1411.0,336.4" fill="#f4f2e0"/>
<polygon points="1424.5,321.6 1428.0,321.6 1428.0,336.6 1424.5,336.6" fill="#f4f2e0"/>
<polygon points="1438.0,321.8 1441.5,321.8 1441.5,336.8 1438.0,336.8" fill="#f4f2e0"/>
<polygon points="1451.5,322.0 1455.0,322.0 1455.0,337.0 1451.5,337.0" fill="#f4f2e0"/>
<polygon points="1465.0,322.2 1468.5,322.2 1468.5,337.2 1465.0,337.2" fill="#f4f2e0"/>
<polygon points="1478.5,322.4 1482.0,322.4 1482.0,337.4 1478.5,337.4" fill="#f4f2e0"/>
<polygon points="1492.0,322.6 1495.5,322.6 1495.5,337.6 1492.0,337.6" fill="#f4f2e0"/>
<polygon points="1253.0,352.0 1318.0,361.4 1318.0,381.0 1253.0,364.0" fill="#fbf8e2" stroke="#6a6a60" stroke-width="0.6"/>
<polygon points="1312.0,305.0 1380.0,310.0 1380.0,350.0 1312.0,351.0" fill="#e57a50" stroke="#4a2416" stroke-width="0.8"/>
<polygon points="1312.0,305.0 1324.0,301.0 1391.0,305.0 1380.0,310.0" fill="#f58a5c" stroke="#4a2416" stroke-width="0.6"/>
<line x1="1312.0" y1="310.0" x2="1380.0" y2="314.0" stroke="#4a2416" stroke-width="0.6"/>
<line x1="1338.0" y1="307.0" x2="1338.0" y2="350.0" stroke="#4a2416" stroke-width="0.6"/>
<polygon points="1364.0,320.0 1375.0,318.0 1375.0,348.0 1364.0,350.0" fill="#c49088" stroke="#2a1a12" stroke-width="0.8"/>
<polygon points="1318.0,362.0 1474.0,399.0 1474.0,450.0 1461.0,452.0 1436.0,465.0 1320.0,427.0" fill="#e0744a" stroke="#4a2416" stroke-width="0.9"/>
<line x1="1320.0" y1="378.0" x2="1474.0" y2="417.0" stroke="#4a2416" stroke-width="0.8"/>
<polygon points="1509.0,308.5 1556.0,296.0 1560.0,305.0 1542.0,312.0" fill="#e0744a" stroke="#4a2416" stroke-width="0.6"/>
<polygon points="1318.0,362.0 1400.0,342.0 1428.0,345.5 1542.0,312.0 1556.0,296.0 1682.0,311.5 1474.0,399.0" fill="#f58a5c" stroke="#4a2416" stroke-width="0.9"/>
<polygon points="1400.0,342.0 1428.0,345.5 1428.0,360.6 1400.0,354.5" fill="#e0744a" stroke="#4a2416" stroke-width="0.6"/>
<polygon points="1428.0,345.5 1542.0,312.0 1542.0,323.6 1428.0,360.6" fill="#f88a5c" stroke="#4a2416" stroke-width="0.6"/>
<polygon points="1324.0,367.0 1400.0,347.0 1400.0,354.5 1428.0,360.6 1542.4,323.6 1562.0,304.0 1664.0,318.0 1472.0,394.0" fill="#adb0cb"/>
<line x1="1472.0" y1="394.0" x2="1664.0" y2="318.0" stroke="#5a3a30" stroke-width="0.6"/>
<line x1="1342.0" y1="398.0" x2="1344.0" y2="386.0" stroke="#666" stroke-width="2"/>
<polygon points="1413.0,478.0 1461.0,452.0 1466.0,456.0 1419.0,483.0" fill="#f58a5c" stroke="#4a2416" stroke-width="0.8"/>
<polygon points="1461.0,452.0 1466.0,456.0 1466.0,462.0 1461.0,458.0" fill="#e0744a"/>
<polygon points="1333.0,420.0 1346.0,418.0 1346.0,445.0 1333.0,447.0" fill="#c8907e" stroke="#777" stroke-width="0.7"/>
<polygon points="1449.0,571.0 1488.5,543.6 1488.5,549.0 1449.0,577.0" fill="#2a2c2e" stroke="#1a1a1a" stroke-width="1"/>
<polygon points="1449.0,571.0 1488.5,543.6 1501.8,551.0 1461.8,579.0" fill="#b4b6d2" stroke="#1a1a1a" stroke-width="1.6"/>
<polygon points="1449.0,571.0 1461.8,579.0 1461.8,585.0 1449.0,577.0" fill="#2a2c2e"/>
<polygon points="1627.0,445.0 1655.0,430.0 1658.0,436.0 1630.0,451.0" fill="#b4b6d2" stroke="#1a1a1a" stroke-width="1.6"/>
<polygon points="1100.0,420.0 1118.0,427.0 1117.0,433.0 1099.0,426.0" fill="#999" stroke="#1a1a1a" stroke-width="1.4"/>
<polygon points="1483.0,590.0 1497.0,582.0 1497.0,598.0 1486.0,606.0" fill="#55575c" stroke="#333" stroke-width="0.6"/>
<polygon points="1454.0,617.0 1485.0,592.0 1493.0,604.0 1467.0,632.0" fill="#9c9eb4" stroke="#444" stroke-width="0.6"/>
<line x1="1456.0" y1="619.0" x2="1486.0" y2="594.0" stroke="#6a6c7a" stroke-width="0.6"/>
<line x1="1458.2" y1="621.4" x2="1487.3" y2="595.9" stroke="#6a6c7a" stroke-width="0.6"/>
<line x1="1460.4" y1="623.8" x2="1488.6" y2="597.8" stroke="#6a6c7a" stroke-width="0.6"/>
<line x1="1462.6" y1="626.2" x2="1489.9" y2="599.7" stroke="#6a6c7a" stroke-width="0.6"/>
<line x1="1464.8" y1="628.6" x2="1491.2" y2="601.6" stroke="#6a6c7a" stroke-width="0.6"/>
<line x1="1467.0" y1="631.0" x2="1492.5" y2="603.5" stroke="#6a6c7a" stroke-width="0.6"/>
<polygon points="1093.0,486.0 1113.0,477.0 1113.0,490.0 1096.0,498.0" fill="#777a80" stroke="#333" stroke-width="0.6"/>
<polygon points="1620.0,487.0 1648.0,472.0 1650.0,488.0 1625.0,500.0" fill="#7a7c86" stroke="#333" stroke-width="0.6"/>
<line x1="1372.0" y1="400.0" x2="1372.0" y2="390.0" stroke="#0000ff" stroke-width="1.5"/>
<line x1="1372.0" y1="400.0" x2="1362.0" y2="405.0" stroke="#ff0000" stroke-width="1.5"/>
<line x1="1372.0" y1="400.0" x2="1384.0" y2="403.0" stroke="#00cc00" stroke-width="1.5"/>

  </svg>
  <!-- BUILDING END -->
  <!-- viewport button, cube, gizmo -->
  <div class="abs" style="left:958px;top:39px;width:32px;height:32px;background:#525252"></div>
  <svg class="abs" style="left:958px;top:39px" width="32" height="32" viewBox="0 0 32 32">
    <path d="M4.4 11.5 V4.3 H12 M20 4.3 H27.6 V11.5 M27.6 20.5 V27.7 H20 M12 27.7 H4.4 V20.5" stroke="#ececec" stroke-width="1.5" fill="none"/>
    <path d="M16 9.7 L21.8 12.9 V19.3 L16 22.6 L10.2 19.3 V12.9 Z" fill="#e0e0e0"/>
  </svg>
  <svg class="abs" style="left:1700px;top:75px" width="110" height="95" viewBox="1700 75 110 95">
    <path d="M1713 88.8 L1750.6 83.3 L1791.6 88.2 L1756 94.8 Z" fill="#fbfbfb" stroke="#333" stroke-width="0.8"/>
    <path d="M1713 88.8 L1756 94.8 L1756 159.7 L1717.9 137.9 Z" fill="#fdfdfd" stroke="#333" stroke-width="0.9"/>
    <path d="M1756 94.8 L1791.6 88.2 L1787 136 L1756 159.7 Z" fill="#fcfcfc" stroke="#333" stroke-width="0.9"/>
    <text transform="translate(1722 117) rotate(20) scale(0.8 1.15)" font-family="Liberation Sans" font-size="11" fill="#777">Справа</text>
    <text transform="translate(1764 126) rotate(-28) scale(0.75 1.2)" font-family="Liberation Sans" font-size="11" fill="#777">Сзади</text>
  </svg>
  <svg class="abs" style="left:960px;top:638px" width="96" height="96" viewBox="960 638 96 96">
    <circle cx="1008.2" cy="685.7" r="46.5" fill="#333030"/>
    <path d="M1008 682 V666" stroke="#0000ee" stroke-width="1.6"/><path d="M1005.6 667 L1008 658.5 L1010.4 667 Z" fill="#0000ee"/>
    <path d="M1004 687.3 L992 691.8" stroke="#ee0000" stroke-width="1.6"/><path d="M993.5 688.6 L987 693.5 L995 694.5 Z" fill="#ee0000"/>
    <path d="M1012 687.3 L1024 690.5" stroke="#00dd00" stroke-width="1.6"/><path d="M1023.5 687.5 L1031.5 692.5 L1022.5 694 Z" fill="#00dd00"/>
    <circle cx="1008" cy="686" r="4.3" fill="#a9a9a9"/>
    <text x="1007" y="652.5" font-family="Liberation Sans" font-size="9" fill="#0000ee">Z</text>
    <text x="980" y="697" font-family="Liberation Sans" font-size="9" fill="#ee0000">X</text>
    <text x="1038" y="694" font-family="Liberation Sans" font-size="9" fill="#00cc00">Y</text>
  </svg>
  <!-- tab icon and close -->
  <svg class="abs" style="left:60px;top:50px" width="40" height="30" viewBox="60 50 40 30">
    <path d="M72 61 H85 M72 65 H85 M72 69 H80" stroke="#e6e6e6" stroke-width="1.7"/>
    <path d="M82.5 68 L87.5 70.8 L82.5 73.6 Z" fill="#e6e6e6"/>
  </svg>
  <svg class="abs" style="left:905px;top:52px" width="30" height="30" viewBox="905 52 30 30">
    <path d="M914 61 L927.8 74.3 M927.8 61 L914 74.3" stroke="#eaeaea" stroke-width="2"/>
  </svg>
  <!-- RIGHT TOOLBAR -->
  <div class="abs rt" style="top:39px;height:775px"></div>
  <div class="abs" style="left:1828px;top:130px;width:36px;height:2px;background:#3a3636"></div>
  <div class="abs" style="left:1828px;top:400px;width:36px;height:2px;background:#3a3636"></div>
  <div class="abs" style="left:1828px;top:449px;width:36px;height:2px;background:#3a3636"></div>
  <div class="abs" style="left:1828px;top:630px;width:36px;height:2px;background:#3a3636"></div>
  <div class="abs" style="left:1828px;top:723px;width:36px;height:2px;background:#3a3636"></div>
  <div class="abs" style="left:1830px;top:639px;width:32px;height:32px;background:#8d8d8d"></div>
  <div class="abs" style="left:1830px;top:683px;width:32px;height:32px;background:#8d8d8d"></div>
  <svg class="abs" style="left:1828px;top:0" width="36" height="821" viewBox="1828 0 36 821">
    <g stroke="#e6e6e6" fill="none" stroke-width="1.4" stroke-linecap="round" stroke-linejoin="round">
      <!-- cloud tree -->
      <path d="M1842 70 H1838.5 Q1834.8 69.5 1834.8 65.3 Q1835 61 1839.5 60.8 Q1840 52 1846.3 52 Q1852.5 52 1853 60.3 Q1857.8 61 1857.9 65.3 Q1857.6 69.5 1853.5 70 H1850.5" stroke-width="1.5"/>
      <path d="M1846.3 57 V74 M1846.3 66 L1841.5 62.5 M1846.3 68 L1851 64.5 M1846.3 61.5 L1849.2 59.2" stroke-width="1.4"/>
      <!-- screen + hex -->
      <path d="M1844 111.5 H1833.5 V94.5 H1856.8 V101.5 M1839.5 111.5 V114 H1837.5" stroke-width="1.3"/>
      <path d="M1843.2 106.5 V103.3 H1846.5 M1855 103.3 H1858.6 V106.5 M1858.6 116 V119.2 H1855 M1846.5 119.2 H1843.2 V116" stroke-width="1.3"/>
      <!-- ruler -->
      <rect x="1833.2" y="151" width="25.5" height="7.8" stroke-width="1.5"/>
      <path d="M1833.2 162 H1858.8" stroke-width="1.9"/>
      <path d="M1837.5 158.5 V154.8 M1840.8 158.5 V156.5 M1844 158.5 V154.8 M1847.2 158.5 V156.5 M1850.4 158.5 V154.8 M1853.6 158.5 V156.5" stroke-width="1"/>
      <!-- section plane -->
      <path d="M1832.7 202.6 L1839.5 196.5 H1859.2 L1852.4 202.6 Z" stroke-width="1.2"/>
      <!-- cube section -->
      <path d="M1834.3 238 L1840 233.3 H1858 V250 L1852 254.8 H1834.3 Z M1834.3 238 H1852 V254.8 M1852 238 L1858 233.3 M1842 233.3 V250 L1834.3 254.8 M1848 233.3 V250 M1842 250 H1858" stroke-width="1.1"/>
      <!-- floor plan -->
      <path d="M1834.5 276.8 H1857.5 V297 H1832.2 V279.5 Z" stroke-width="1.3"/>
      <path d="M1832.2 286 H1857.5 M1844.5 276.8 V297" stroke-width="1" stroke-dasharray="1.6 1.2"/>
      <path d="M1850.6 297 V292.3 H1857.5" stroke-width="1.1"/>
      <!-- target -->
      <circle cx="1845.8" cy="332.1" r="8" stroke-width="1.6"/>
      <path d="M1845.8 322.3 V324.3 M1845.8 340 V342 M1836 332.1 H1838 M1853.6 332.1 H1855.6" stroke-width="1.8"/>
      <!-- flag circle -->
      <circle cx="1845.8" cy="376.1" r="12.6" stroke-width="1"/>
      <path d="M1840.7 383 V369.5 Q1843 368 1845.5 369.7 Q1848.5 371.5 1854 369.8 V378.6 Q1848.5 380.3 1845.5 378.5 Q1843 377 1840.7 378.5" stroke-width="1"/>
      <!-- grid -->
      <path d="M1831 429 L1860.5 412 M1832 439 L1860.5 422.5 M1832.5 423.5 L1851 433.5 M1841 417 L1860 427.3" stroke-width="1.2"/>
      <!-- dashed boxes -->
      <rect x="1834.2" y="462" width="23.6" height="23.7" stroke-width="1.1" stroke-dasharray="2 1.6"/>
      <rect x="1834.2" y="506" width="23.6" height="23.8" stroke-width="1.1" stroke-dasharray="2 1.6"/>
      <rect x="1834.2" y="550" width="23.6" height="23.9" stroke-width="1.1" stroke-dasharray="2 1.6"/>
      <path d="M1844 617.3 H1834.2 V594 H1857.8 V604" stroke-width="1.1" stroke-dasharray="2 1.6"/>
      <!-- small cube -->
      <path d="M1846 468 L1851.6 471.2 V477.6 L1846 480.8 L1840.4 477.6 V471.2 Z M1840.4 471.2 L1846 474.4 L1851.6 471.2 M1846 474.4 V480.8" stroke-width="1"/>
      <!-- orbit -->
      <ellipse cx="1846" cy="699" rx="11.7" ry="5.3" stroke-width="1.7"/>
      <ellipse cx="1846" cy="699" rx="5" ry="11.2" stroke-width="1.7"/>
      <path d="M1846 696 V699.5 L1843 702.5 M1846 699.5 L1849 702.5" stroke-width="0.8"/>
    </g>
    <g fill="#e6e6e6">
      <path d="M1841.2 192.5 L1850.9 186.2 V207 L1841.2 213.5 Z"/>
      <path d="M1846.9 106.5 L1850.9 104.3 L1854.9 106.5 V111 L1850.9 113.3 L1846.9 111 Z"/>
      <circle cx="1845.8" cy="332.1" r="4.2"/>
      <path d="M1843.5 236 L1848 233.3 V250 L1843.5 254 Z" opacity="0.85"/>
      <path d="M1835.5 518 Q1846 506.5 1856.5 518 Q1846 529.5 1835.5 518 Z"/>
      <path d="M1835.5 562 Q1846 550.5 1856.5 562 Q1846 573.5 1835.5 562 Z"/>
      <rect x="1844.2" y="604" width="16" height="16"/>
      <path d="M1835 644 L1846.5 641.8 L1857.5 645 L1856.5 660.5 L1845.8 667.3 L1837.5 660.5 Z"/>
      <path d="M1832 808 L1836 812 H1832 Z"/>
    </g>
    <g fill="none" stroke="#525252">
      <circle cx="1846" cy="518" r="3" stroke-width="1.3"/>
      <circle cx="1846" cy="562" r="3" stroke-width="1.3"/>
      <path d="M1838.5 554 L1853.5 570" stroke-width="2.5"/>
      <path d="M1848 607.5 L1856.5 616.5 M1856.5 607.5 L1848 616.5" stroke="#3a3a3a" stroke-width="1.2"/>
    </g>
    <path d="M1838.5 554 L1853.5 570" stroke="#e6e6e6" stroke-width="1.1"/>
    <path d="M1846 649 L1856.5 645.5 V659.5 L1846 666 Z" fill="#8a8a8a"/>
    <path d="M1835.5 645 L1846.5 642.3 L1856.8 645.3 L1846 648.5 Z" fill="#8a8a8a"/>
    <text x="1834" y="430" font-family="Liberation Sans" font-size="7.5" font-weight="bold" fill="#e6e6e6">1</text>
    <text x="1841.5" y="416" font-family="Liberation Sans" font-size="7.5" font-weight="bold" fill="#e6e6e6">2</text>
  </svg>

  <svg class="abs" style="left:902px;top:707px" width="26" height="22" viewBox="0 0 26 22">
    <path d="M2 11 Q13 -1 24 11 Q13 23 2 11 Z" fill="#6a6a6a"/>
    <circle cx="13" cy="11" r="4.2" fill="#fff"/>
    <circle cx="13" cy="11" r="2.4" fill="#6a6a6a"/>
    <path d="M5 2.5 L22 20.5" stroke="#fff" stroke-width="3.6"/>
    <path d="M4.5 2.2 L22.5 20.8" stroke="#6a6a6a" stroke-width="1.7"/>
  </svg>
  <!-- arrows -->
  <svg class="abs" style="left:760px;top:285px;overflow:visible" width="70" height="100" viewBox="0 0 70 100">
    <defs><filter id="sh" x="-50%" y="-50%" width="200%" height="200%"><feDropShadow dx="2" dy="2" stdDeviation="1.5" flood-color="#000" flood-opacity="0.35"/></filter></defs>
    <g filter="url(#sh)"><line x1="57" y1="93" x2="22" y2="24" stroke="#c0141b" stroke-width="3"/><path d="M15.7 12.3 L30 25 L16 31 Z" fill="#c0141b"/></g>
  </svg>
  <svg class="abs" style="left:1280px;top:700px;overflow:visible" width="150" height="80" viewBox="0 0 150 80">
    <g filter="url(#sh)"><line x1="8" y1="10.8" x2="124" y2="66" stroke="#c0141b" stroke-width="3"/><path d="M138 74 L116 75 L124 58 Z" fill="#c0141b"/></g>
  </svg>
  <!-- toast -->
  <div class="abs" style="left:1424px;top:765px;width:400px;height:40px;background:#fe5353;border-radius:3px;box-shadow:0 2px 4px rgba(0,0,0,.3)"></div>
  <div class="abs" style="left:1424px;top:765px;width:6px;height:40px;background:#ff7f7f;border-radius:3px 0 0 3px"></div>
  <svg class="abs" style="left:1440px;top:774px" width="24" height="21" viewBox="0 0 24 21"><path d="M12 1 L23 20 H1 Z" fill="#fff"/><rect x="11" y="8" width="2" height="6" fill="#fe5353"/><rect x="11" y="15.5" width="2" height="2" fill="#fe5353"/></svg>
  <div class="abs" style="left:1479px;top:776px;font-size:15px;font-weight:bold;color:#fff">error</div>
  <svg class="abs" style="left:1792px;top:775px" width="20" height="20" viewBox="0 0 20 20"><circle cx="10" cy="10" r="10" fill="#fff"/><path d="M6 6 L14 14 M14 6 L6 14" stroke="#fe5353" stroke-width="2"/></svg>
</div>
</body></html>
